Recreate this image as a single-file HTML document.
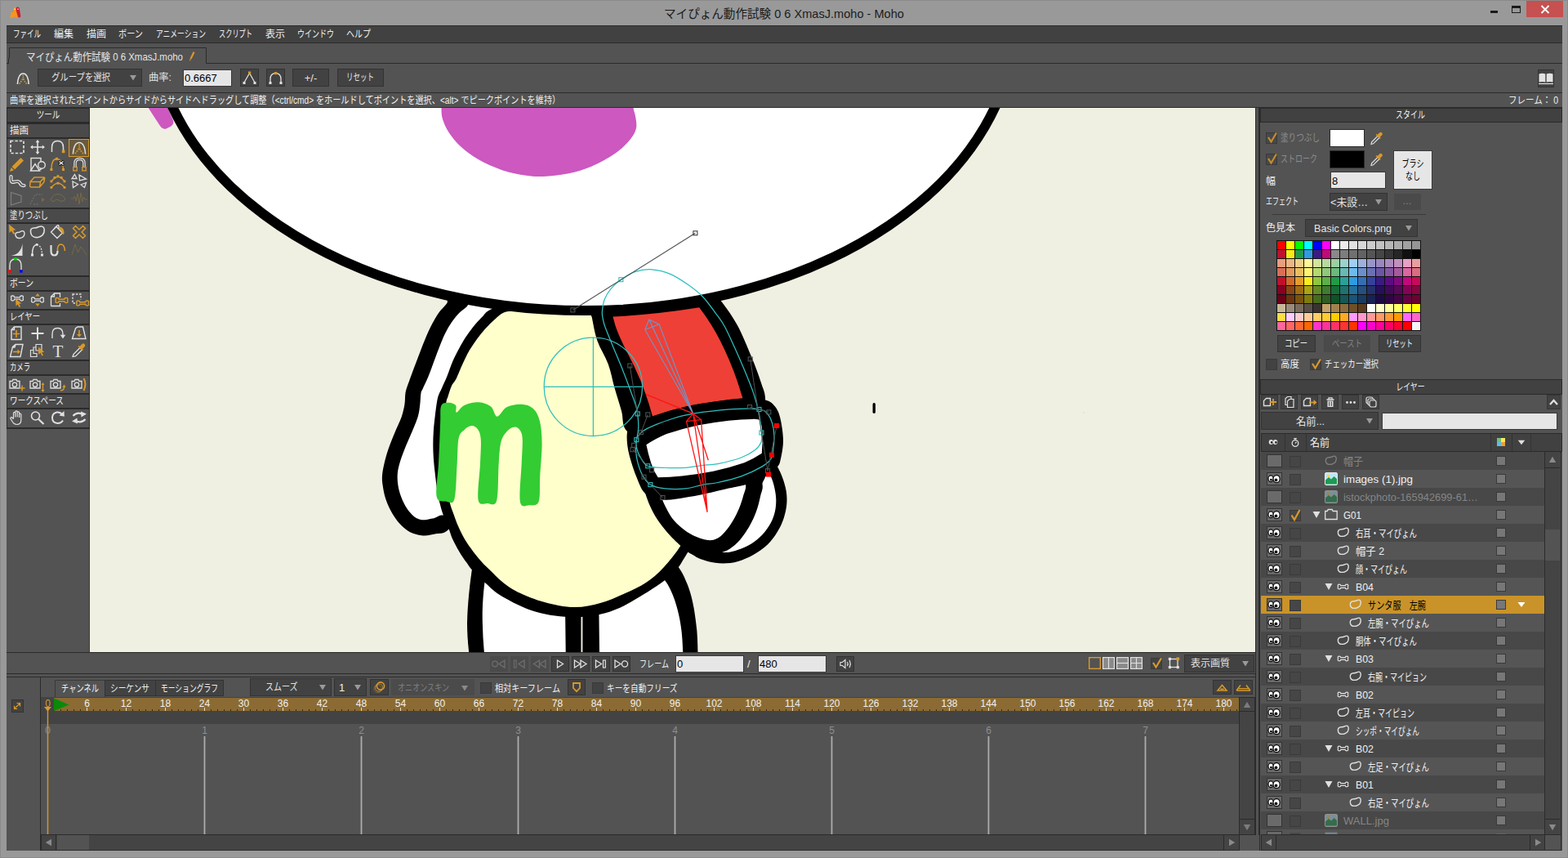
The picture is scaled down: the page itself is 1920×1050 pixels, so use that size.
<!DOCTYPE html>
<html lang="ja"><head><meta charset="utf-8"><title>Moho</title>
<style>
html,body{margin:0;padding:0;}
body{width:1920px;height:1050px;overflow:hidden;background:#999999;font-family:"Liberation Sans", sans-serif;position:relative;}
div,svg,span{position:absolute;}
span{white-space:nowrap;transform-origin:0 50%;}
svg{overflow:visible;}
</style></head>
<body>
<div style="left:0px;top:0px;width:1920px;height:1050px;background:#999999;"></div>
<div style="left:0px;top:0px;width:1920px;height:1px;background:#8a8a8a;"></div>
<div style="left:0px;top:0px;width:1px;height:1050px;background:#8a8a8a;"></div>
<div style="left:1919px;top:0px;width:1px;height:1050px;background:#8a8a8a;"></div>
<div style="left:0px;top:1049px;width:1920px;height:1px;background:#8a8a8a;"></div>
<svg style="left:11px;top:8px;" width="15" height="15" viewBox="0 0 15 15"><path d="M1.2 13.2 L2.6 7.6 Q3.2 6 4.6 6.6 L5.2 7.2 L5.8 2.4 Q6.2 .6 7.6 .9 Q9 1.2 9.3 2.8 L10.2 13 Q10 14 8.8 14 Q7.6 14 7.4 13 L7 11 L6.4 13.2 Q6 14.2 4.8 14 Q4 13.8 3.9 13 L3.6 13.4 Q3 14.3 2 14 Q1.1 13.8 1.2 13.2Z" fill="#f7941d"/>
<path d="M8.6 2 Q9.4 .4 11 .6 Q12.4 .9 12.8 2.4 L14.3 11.6 Q14.4 13.2 13 13.5 Q11.6 13.7 11 12.4 L8.6 4.4 Q8.3 3 8.6 2Z" fill="#c8202f"/>
<rect x="6.6" y="2.6" width="1.3" height="1.3" fill="#fff"/><rect x="10.3" y="2.6" width="1.3" height="1.3" fill="#fff"/></svg>
<div style="left:1825px;top:13px;width:9px;height:3px;background:#1a1a1a;"></div>
<div style="left:1851px;top:7px;width:11px;height:9px;border:1px solid #1a1a1a;border-top:3px solid #1a1a1a;box-sizing:border-box;"></div>
<div style="left:1869px;top:1px;width:45px;height:20px;background:#c75050;"></div>
<svg style="left:1886px;top:6px;" width="12" height="11" viewBox="0 0 12 11"><path d="M1.5 1 L10.5 10 M10.5 1 L1.5 10" stroke="#fff" stroke-width="1.9" fill="none"/></svg>
<div style="left:8px;top:31px;width:1905px;height:1010px;background:#535353;"></div>
<div style="left:8px;top:31px;width:1905px;height:22px;background:#414141;border-top:1px solid #2b2b2b;border-bottom:1px solid #2b2b2b;box-sizing:border-box;"></div>
<div style="left:8px;top:77px;width:1905px;height:1px;background:#2b2b2b;"></div>
<svg style="left:9px;top:57px;" width="246" height="21" viewBox="0 0 246 21"><path d="M1.5 20.5 L1.5 15 L2.5 13 L2.5 1.5 L243.5 1.5 L243.5 20.5" fill="#535353" stroke="#2b2b2b" stroke-width="1"/><rect x="2" y="20" width="241" height="2" fill="#535353"/></svg>
<svg style="left:230px;top:62px;" width="10" height="14" viewBox="0 0 10 14"><path d="M6.5 1.2 L8.6 2 L4.6 10.2 L2.6 9.4Z" fill="#d8992b"/><path d="M2.4 10 L4.3 10.8 L2 12.8Z" fill="#d8992b"/></svg>
<div style="left:8px;top:113px;width:1905px;height:1px;background:#2b2b2b;"></div>
<svg style="left:20px;top:86px;" width="17" height="18" viewBox="0 0 17 18"><path d="M1.4 17 C2 8.5 4.4 3.9 8.3 3.9 C12.2 3.9 14.6 8.5 15.2 17" fill="none" stroke="#e4e4e4" stroke-width="1.5"/><rect x="7.5" y="5.8" width="1.6" height="1.5" fill="#d8992b"/><rect x="7.6" y="8.2" width="1.6" height="1.5" fill="#d8992b"/><rect x="6.6" y="10.6" width="3.4" height="1.5" fill="#d8992b"/><rect x="5" y="13" width="1.7" height="1.5" fill="#d8992b"/><rect x="9.6" y="13" width="1.7" height="1.5" fill="#d8992b"/><rect x="3.3" y="15.2" width="1.7" height="1.5" fill="#d8992b"/><rect x="11.4" y="15.2" width="1.7" height="1.5" fill="#d8992b"/></svg>
<div style="left:46px;top:84px;width:128px;height:22px;background:#424242;border:1px solid #333333;box-sizing:border-box;"></div>
<svg style="left:158px;top:91.0px;" width="10" height="8" viewBox="0 0 10 8"><path d="M1 1 L9 1 L5 7.5Z" fill="#9a9a9a"/></svg>
<div style="left:224px;top:85px;width:60px;height:21px;background:#e6e6e6;border:1px solid #3a3a3a;box-sizing:border-box;"></div>
<div style="left:294px;top:84px;width:23px;height:22px;background:#424242;border:1px solid #333333;box-sizing:border-box;"></div>
<svg style="left:296px;top:86px;" width="19" height="18" viewBox="0 0 19 18"><path d="M3 15 L9.5 3.5 L16 15" fill="none" stroke="#e0e0e0" stroke-width="1.3"/><rect x="1.5" y="14" width="3" height="3" fill="#e0e0e0"/><rect x="14.5" y="14" width="3" height="3" fill="#e0e0e0"/><rect x="8" y="1.5" width="3.2" height="3.2" fill="#d8992b"/></svg>
<div style="left:326px;top:84px;width:23px;height:22px;background:#424242;border:1px solid #333333;box-sizing:border-box;"></div>
<svg style="left:328px;top:86px;" width="19" height="18" viewBox="0 0 19 18"><path d="M3 15 V11 Q3 3.6 9.5 3.6 Q16 3.6 16 11 V15" fill="none" stroke="#e0e0e0" stroke-width="1.3"/><rect x="1.5" y="14" width="3" height="3" fill="#e0e0e0"/><rect x="14.5" y="14" width="3" height="3" fill="#e0e0e0"/><rect x="8" y="2" width="3.2" height="3.2" fill="#d8992b"/></svg>
<div style="left:358px;top:84px;width:45px;height:22px;background:#424242;border:1px solid #333333;box-sizing:border-box;"></div>
<div style="left:413px;top:84px;width:57px;height:22px;background:#424242;border:1px solid #333333;box-sizing:border-box;"></div>
<div style="left:1883px;top:85px;width:20px;height:22px;background:#424242;border:1px solid #333333;box-sizing:border-box;"></div>
<svg style="left:1883px;top:88px;" width="20" height="17" viewBox="0 0 20 17"><path d="M1.5 2.5 Q5.5 1 9.3 2.5 V12.5 Q5.5 11.3 1.5 12.5Z M10.7 2.5 Q14.5 1 18.5 2.5 V12.5 Q14.5 11.3 10.7 12.5Z" fill="#e2e2e2"/><path d="M1 14.5 H19" stroke="#e2e2e2" stroke-width="1.2"/></svg>
<div style="left:8px;top:131px;width:1905px;height:1px;background:#2b2b2b;"></div>
<div style="left:8px;top:132px;width:102px;height:393px;background:#2b2b2b;"></div>
<div style="left:9px;top:133px;width:100px;height:16px;background:#444444;"></div>
<div style="left:9px;top:525px;width:100px;height:273px;background:#535353;"></div>
<div style="left:8px;top:525px;width:1px;height:273px;background:#535353;"></div>
<div style="left:109px;top:525px;width:1px;height:273px;background:#3c3c3c;"></div>
<div style="left:9px;top:152px;width:100px;height:16px;background:#4a4a4a;"></div>
<div style="left:9px;top:170px;width:100px;height:84px;background:#535353;"></div>
<div style="left:9px;top:256px;width:100px;height:16px;background:#4a4a4a;"></div>
<div style="left:9px;top:274px;width:100px;height:63px;background:#535353;"></div>
<div style="left:9px;top:339px;width:100px;height:16px;background:#4a4a4a;"></div>
<div style="left:9px;top:357px;width:100px;height:21px;background:#535353;"></div>
<div style="left:9px;top:380px;width:100px;height:16px;background:#4a4a4a;"></div>
<div style="left:9px;top:398px;width:100px;height:42px;background:#535353;"></div>
<div style="left:9px;top:442px;width:100px;height:16px;background:#4a4a4a;"></div>
<div style="left:9px;top:460px;width:100px;height:21px;background:#535353;"></div>
<div style="left:9px;top:483px;width:100px;height:16px;background:#4a4a4a;"></div>
<div style="left:9px;top:501px;width:100px;height:22px;background:#535353;"></div>
<div style="left:84px;top:170px;width:25px;height:22px;background:#6a5a3c;border:1px solid #d8992b;box-sizing:border-box;"></div>
<svg style="left:9.5px;top:170px;" width="22" height="20" viewBox="0 0 22 20"><rect x="3" y="2.5" width="16" height="15" fill="none" stroke="#e0e0e0" stroke-width="1.7" stroke-dasharray="3.4 2"/></svg>
<svg style="left:35.0px;top:170px;" width="22" height="20" viewBox="0 0 22 20"><path d="M11 2.5 V17.5 M3.5 10 H18.5" fill="none" stroke="#e0e0e0" stroke-width="1.6" /><path d="M11 1 L8.6 4.2 H13.4Z M11 19 L8.6 15.8 H13.4Z M2 10 L5.2 7.6 V12.4Z M20 10 L16.8 7.6 V12.4Z" fill="#e0e0e0" stroke="#e0e0e0" stroke-width="0" /></svg>
<svg style="left:60.0px;top:170px;" width="22" height="20" viewBox="0 0 22 20"><path d="M3.5 16 V10.5 Q3.5 2.5 10.5 2.5 Q17.5 2.5 17.5 10.5 V14" fill="none" stroke="#e0e0e0" stroke-width="1.5" /><rect x="15.8" y="13.6" width="3.6" height="3.6" fill="#d8992b"/></svg>
<svg style="left:85.5px;top:170.5px;" width="22" height="20" viewBox="0 0 22 20"><path d="M3.4 17.5 C4 9 6.6 3.4 11 3.4 C15.4 3.4 18 9 18.6 17.5" fill="none" stroke="#e0e0e0" stroke-width="1.5" /><rect x="10.2" y="5.6" width="1.7" height="1.6" fill="#d8992b"/><rect x="10.3" y="8.1" width="1.7" height="1.6" fill="#d8992b"/><rect x="9.2" y="10.7" width="3.7" height="1.6" fill="#d8992b"/><rect x="7.5" y="13.2" width="1.8" height="1.6" fill="#d8992b"/><rect x="12.6" y="13.2" width="1.8" height="1.6" fill="#d8992b"/><rect x="5.6" y="15.6" width="1.8" height="1.6" fill="#d8992b"/><rect x="14.5" y="15.6" width="1.8" height="1.6" fill="#d8992b"/></svg>
<svg style="left:9.5px;top:191px;" width="22" height="20" viewBox="0 0 22 20"><path d="M15.5 2 L19 5.5 L8 16.5 L4.5 13Z" fill="#d8992b"/><path d="M3.7 14 L7 17.3 L2 19Z" fill="#d8992b"/></svg>
<svg style="left:35.0px;top:191px;" width="22" height="20" viewBox="0 0 22 20"><rect x="3" y="2.5" width="12" height="14" fill="none" stroke="#e0e0e0" stroke-width="1.4"/><path d="M2.5 18 L8 9.5 L13.5 18Z" fill="#535353" stroke="#e0e0e0" stroke-width="1.4"/><circle cx="16" cy="11" r="4.3" fill="#535353" stroke="#e0e0e0" stroke-width="1.4"/></svg>
<svg style="left:60.0px;top:191px;" width="22" height="20" viewBox="0 0 22 20"><path d="M3 16 Q3 3.5 9.5 3.5 Q16 3.5 17.5 15" fill="none" stroke="#d8992b" stroke-width="1.4" /><rect x="1.4" y="15" width="3" height="3" fill="#d8992b"/><rect x="8" y="1.8" width="3" height="3" fill="#d8992b"/><rect x="16" y="15" width="3" height="3" fill="#d8992b"/><path d="M12 6 l6 5 M18 6 l-6 5" stroke="#111" stroke-width="3"/><path d="M12.5 6.5 l5 4 M17.5 6.5 l-5 4" stroke="#fff" stroke-width="1.2"/></svg>
<svg style="left:85.5px;top:191px;" width="22" height="20" viewBox="0 0 22 20"><path d="M6 14 V9 Q6 3.5 11.5 3.5 Q17 3.5 17 9 V14" fill="none" stroke="#e0e0e0" stroke-width="3.6" /><path d="M6 14 V9 Q6 3.5 11.5 3.5 Q17 3.5 17 9 V14" fill="none" stroke="#535353" stroke-width="1.2" /><rect x="3.8" y="13.5" width="4.4" height="4.4" fill="#535353" stroke="#d8992b" stroke-width="1.3"/><rect x="14.8" y="13.5" width="4.4" height="4.4" fill="#535353" stroke="#d8992b" stroke-width="1.3"/></svg>
<svg style="left:9.5px;top:212px;" width="22" height="20" viewBox="0 0 22 20"><path d="M3.5 4 V8 Q3.5 12 8 10.5 Q13 9 14.5 12 Q16 15.5 19.5 15" fill="none" stroke="#e0e0e0" stroke-width="4.2" stroke-linecap="round"/><path d="M3.5 4 V8 Q3.5 12 8 10.5 Q13 9 14.5 12 Q16 15.5 19.5 15" fill="none" stroke="#535353" stroke-width="1.6" stroke-linecap="round"/></svg>
<svg style="left:35.0px;top:212px;" width="22" height="20" viewBox="0 0 22 20"><path d="M2 10.5 L7 5 H18.5 Q20 5 19.6 6.8 L18.8 11 L13.5 17 H3 Q1.6 17 1.7 15.5Z M2 10.5 H13 Q14.6 10.5 14.4 12 L13.5 17 M14 10.6 L19.4 5.4" fill="none" stroke="#d8992b" stroke-width="1.5" /></svg>
<svg style="left:60.0px;top:212px;" width="22" height="20" viewBox="0 0 22 20"><path d="M3 10 Q11 -1 19 10 M3 17.5 Q11 7 19 17.5" fill="none" stroke="#d8992b" stroke-width="1.3" /><rect x="1.5" y="8.5" width="2.8" height="2.8" fill="#d8992b"/><rect x="5.5" y="4" width="2.8" height="2.8" fill="#d8992b"/><rect x="9.6" y="2.2" width="2.8" height="2.8" fill="#d8992b"/><rect x="13.8" y="4" width="2.8" height="2.8" fill="#d8992b"/><rect x="17.6" y="8.5" width="2.8" height="2.8" fill="#d8992b"/><rect x="1.5" y="16" width="2.8" height="2.8" fill="#d8992b"/><rect x="9.6" y="10.8" width="2.8" height="2.8" fill="#d8992b"/><rect x="17.6" y="16" width="2.8" height="2.8" fill="#d8992b"/></svg>
<svg style="left:85.5px;top:212px;" width="22" height="20" viewBox="0 0 22 20"><path d="M2 6.5 L5.5 1.5 L8 6.5Z M11 2 L19.5 7 L11.5 9Z M3 10 L9.5 13.5 L3.5 17.5Z M13 14 L19.5 11.5 L17.5 17.5Z" fill="none" stroke="#e0e0e0" stroke-width="1.3" /></svg>
<svg style="left:9.5px;top:233px;" width="22" height="20" viewBox="0 0 22 20"><path d="M3.5 2.5 L16 6.5 V14 L3.5 18Z" fill="none" stroke="#808080" stroke-width="1.1" /></svg>
<svg style="left:35.0px;top:233px;" width="22" height="20" viewBox="0 0 22 20"><path d="M2 17 L8 5 H17 M6 17 H12" fill="none" stroke="#777" stroke-width="1" stroke-dasharray="2 1.6"/><path d="M16 9 l4 2.5 l-4 2.5Z" fill="#7a6a44"/></svg>
<svg style="left:60.0px;top:233px;" width="22" height="20" viewBox="0 0 22 20"><path d="M2 11 Q6 4 11 4.5 Q17 5 20 11 Q16 15 12 12 Q8 10 6.5 13.5 Q3.5 14 2 11Z" fill="none" stroke="#7a6a44" stroke-width="1" /></svg>
<svg style="left:85.5px;top:233px;" width="22" height="20" viewBox="0 0 22 20"><path d="M1 10 H4 L5.5 7 L7 13 L9 4 L11 17 L13 3 L15 14 L16.5 8 L18 11 H21" fill="none" stroke="#7a6a44" stroke-width="0.9" /></svg>
<svg style="left:9.5px;top:274px;" width="22" height="20" viewBox="0 0 22 20"><path d="M1 .5 L1.5 11 L4 8.6 L6.3 12.8 L8.2 11.8 L6 7.8 L9.5 7.4Z" fill="#d8992b"/><path d="M9 14 Q8 11 11.5 10.5 Q14 10.5 16 9 Q19.5 7.5 20 11.5 Q20 16.5 14.5 17.5 Q10 18 9 14Z" fill="none" stroke="#e0e0e0" stroke-width="1.4" /></svg>
<svg style="left:35.0px;top:274px;" width="22" height="20" viewBox="0 0 22 20"><path d="M2.5 10 Q2 5 6.5 5 Q9.5 5.2 12.5 3.5 Q18.5 1.5 19.3 7 Q19.5 14.5 11.5 16.5 Q3.5 17.5 2.5 10Z" fill="none" stroke="#e0e0e0" stroke-width="1.6" /></svg>
<svg style="left:60.0px;top:274px;" width="22" height="20" viewBox="0 0 22 20"><path d="M2.5 10 L9 3.5 L16.5 11 L10 17.5Z M5 7.5 L8 4 L10 2 Q11.5 1 12 3 L12 6" fill="none" stroke="#e0e0e0" stroke-width="1.4" /><path d="M12.5 3.5 Q17.5 4 18.5 9.5 Q19 12.5 17.5 13 Q16 12.5 16.3 10.5 L12 5.5Z" fill="#d8992b"/></svg>
<svg style="left:85.5px;top:274px;" width="22" height="20" viewBox="0 0 22 20"><path d="M3.5 5.5 L6.5 2.5 L11 7 L15.5 2.5 L18.5 5.5 L14 10 L18.5 14.5 L15.5 17.5 L11 13 L6.5 17.5 L3.5 14.5 L8 10Z" fill="none" stroke="#d8992b" stroke-width="1.5" /></svg>
<svg style="left:9.5px;top:296px;" width="22" height="20" viewBox="0 0 22 20"><path d="M3 17 Q15.5 15.5 17.5 2 V17Z" fill="#e0e0e0"/></svg>
<svg style="left:35.0px;top:296px;" width="22" height="20" viewBox="0 0 22 20"><path d="M4.5 15 Q4.5 4 10 3.5" fill="none" stroke="#e0e0e0" stroke-width="1.4" /><path d="M10 3.5 Q16 4 16.5 15" fill="none" stroke="#e0e0e0" stroke-width="1.3" stroke-dasharray="2 1.6"/><rect x="3" y="14.5" width="3" height="3" fill="#e0e0e0"/><rect x="15" y="14.5" width="3" height="3" fill="#e0e0e0"/><rect x="8.8" y="2" width="2.6" height="2.6" fill="#e0e0e0"/></svg>
<svg style="left:60.0px;top:296px;" width="22" height="20" viewBox="0 0 22 20"><path d="M2.5 4 V11 Q2.5 16.5 6.5 16.5 Q10.5 16.5 10.5 11" fill="none" stroke="#e0e0e0" stroke-width="2.2" /><path d="M10.5 11 V8 Q11 3 15 3 Q19 3.5 19.5 11" fill="none" stroke="#d8992b" stroke-width="1.6" /></svg>
<svg style="left:85.5px;top:296px;" width="22" height="20" viewBox="0 0 22 20"><path d="M2 16 L6 3 L9.5 13 L13 6 L16 10 L20 16" fill="none" stroke="#7a6a44" stroke-width="0.9" /></svg>
<svg style="left:9.5px;top:315px;" width="22" height="20" viewBox="0 0 22 20"><path d="M2 17 V10 Q2 2 9 2 Q16 2 16 10 V17" fill="none" stroke="#e0e0e0" stroke-width="1.4" /><rect x="0.2" y="15.2" width="3.4" height="3.4" fill="#ff0000"/><rect x="14.2" y="15.2" width="3.4" height="3.4" fill="#0000ff"/><rect x="7.2" y="0.2" width="3.4" height="3.4" fill="#00d000"/></svg>
<svg style="left:9.5px;top:357px;" width="22" height="20" viewBox="0 0 22 20"><path d="M4 8 q-1.5 -3 1.5 -3 q2 0 2.2 1.8 h6.6 q.2 -1.8 2.2 -1.8 q3 0 1.5 3 q1.5 3 -1.5 3 q-2 0 -2.2 -1.8 h-6.6 q-.2 1.8 -2.2 1.8 q-3 0 -1.5 -3Z" fill="none" stroke="#e0e0e0" stroke-width="1.3" /><path d="M9 8.5 L9.5 17.5 L11.7 15.4 L13.6 19 L15.2 18.2 L13.3 14.7 L16.4 14.4Z" fill="#d8992b"/></svg>
<svg style="left:35.0px;top:357px;" width="22" height="20" viewBox="0 0 22 20"><path d="M4 10 q-1.5 -3 1.5 -3 q2 0 2.2 1.8 h6.6 q.2 -1.8 2.2 -1.8 q3 0 1.5 3 q1.5 3 -1.5 3 q-2 0 -2.2 -1.8 h-6.6 q-.2 1.8 -2.2 1.8 q-3 0 -1.5 -3Z" fill="none" stroke="#e0e0e0" stroke-width="1.3" /><path d="M11 2 L8.2 5.6 H13.8Z M11 18 L8.2 14.4 H13.8Z" fill="#d8992b"/></svg>
<svg style="left:60.0px;top:357px;" width="22" height="20" viewBox="0 0 22 20"><path d="M2.5 17.5 V6 L6.5 2 H13.5 V7 M13.5 14 V17.5 H2.5 M6.5 2 V6 H2.5" fill="none" stroke="#e0e0e0" stroke-width="1.3" /><path d="M8.5 10.5 q-1.5 -3 1.5 -3 q2 0 2.2 1.8 h6.6 q.2 -1.8 2.2 -1.8 q3 0 1.5 3 q1.5 3 -1.5 3 q-2 0 -2.2 -1.8 h-6.6 q-.2 1.8 -2.2 1.8 q-3 0 -1.5 -3Z" fill="none" stroke="#d8992b" stroke-width="1.5" /></svg>
<svg style="left:85.5px;top:357px;" width="22" height="20" viewBox="0 0 22 20"><rect x="3" y="3" width="10" height="11" fill="none" stroke="#e0e0e0" stroke-width="1.3" stroke-dasharray="2.4 1.6"/><rect x="8" y="9.5" width="13" height="9" fill="#535353"/><path d="M8.2 14 q-1.5 -3 1.5 -3 q2 0 2.2 1.8 h6.6 q.2 -1.8 2.2 -1.8 q3 0 1.5 3 q1.5 3 -1.5 3 q-2 0 -2.2 -1.8 h-6.6 q-.2 1.8 -2.2 1.8 q-3 0 -1.5 -3Z" fill="none" stroke="#d8992b" stroke-width="1.5" /></svg>
<svg style="left:9.5px;top:398px;" width="22" height="20" viewBox="0 0 22 20"><path d="M4 17.5 V5.5 L7.5 2 H16 V17.5Z M7.5 2 V5.5 H4" fill="none" stroke="#e0e0e0" stroke-width="1.4" /><path d="M10 6 V15 M5.8 10.5 H14.2" fill="none" stroke="#d8992b" stroke-width="1.6" /></svg>
<svg style="left:35.0px;top:398px;" width="22" height="20" viewBox="0 0 22 20"><path d="M11 2.5 V17.5 M3.5 10 H18.5" fill="none" stroke="#e0e0e0" stroke-width="2" /></svg>
<svg style="left:60.0px;top:398px;" width="22" height="20" viewBox="0 0 22 20"><path d="M4 16 V11 Q4 3.5 10.5 3.5 Q17 3.5 17 11 V12" fill="none" stroke="#e0e0e0" stroke-width="1.4" /><path d="M17 16.5 L13.8 11.8 H20.2Z" fill="#e0e0e0"/></svg>
<svg style="left:85.5px;top:398px;" width="22" height="20" viewBox="0 0 22 20"><path d="M2.5 16.5 L6.5 4 L9 2 H15.5 L19 16.5Z" fill="none" stroke="#e0e0e0" stroke-width="1.4" /><path d="M11 6 V12" fill="none" stroke="#d8992b" stroke-width="1.6" /><path d="M11 14.5 L8 11 H14Z" fill="#d8992b"/></svg>
<svg style="left:9.5px;top:419px;" width="22" height="20" viewBox="0 0 22 20"><path d="M2.5 17.5 L5.5 5.5 L9 2.5 H18 L15 17.5Z M9 2.5 L8 6 H5.5" fill="none" stroke="#e0e0e0" stroke-width="1.4" /><path d="M6 11.5 H12" fill="none" stroke="#d8992b" stroke-width="1.6" /><path d="M15 11.5 L11.5 8.5 V14.5Z" fill="#d8992b"/></svg>
<svg style="left:35.0px;top:419px;" width="22" height="20" viewBox="0 0 22 20"><path d="M2.5 17.5 V9.5 H6 V13.5 H10 V17.5Z M6 13.5 V6 H9 V10 H13 V13.5 M9 6 V2.5 H16 V10 H13" fill="none" stroke="#e0e0e0" stroke-width="1.2" /><path d="M12 5.5 L12.4 14.8 L14.6 12.8 L16.3 16.5 L18 15.7 L16.2 12.2 L19.2 11.8Z" fill="#d8992b"/></svg>
<span style="left:64.5px;top:418px;font-family:'Liberation Serif',serif;font-size:21px;line-height:24px;color:#e0e0e0;">T</span>
<svg style="left:85.5px;top:419px;" width="22" height="20" viewBox="0 0 22 20"><path d="M3 17.5 L4 14.5 L12 6.5 L14.5 9 L6.5 17Z" fill="none" stroke="#e0e0e0" stroke-width="1.3" /><path d="M11.5 5 L14.5 2 Q16 .6 17.6 2.2 Q19 3.8 17.6 5.2 L15 8 L16 9 L14.8 10.2 L9.6 5 L10.8 3.8Z" fill="#d8992b"/></svg>
<svg style="left:9.5px;top:460px;" width="22" height="20" viewBox="0 0 22 20"><path d="M2 6.5 H5 L6 4.5 H10 L11 6.5 H14 V15 H2Z" fill="none" stroke="#e0e0e0" stroke-width="1.3" /><circle cx="8" cy="10.8" r="2.7" fill="none" stroke="#e0e0e0" stroke-width="1.3"/><path d="M17 11.5 V18.5 M13.5 15 H20.5" fill="none" stroke="#d8992b" stroke-width="1.4" /></svg>
<svg style="left:35.0px;top:460px;" width="22" height="20" viewBox="0 0 22 20"><path d="M2 6.5 H5 L6 4.5 H10 L11 6.5 H14 V15 H2Z" fill="none" stroke="#e0e0e0" stroke-width="1.3" /><circle cx="8" cy="10.8" r="2.7" fill="none" stroke="#e0e0e0" stroke-width="1.3"/><path d="M17.5 10 V18" fill="none" stroke="#d8992b" stroke-width="1.3" /><path d="M17.5 8 L15.5 11 H19.5Z M17.5 20 L15.5 17 H19.5Z" fill="#d8992b"/></svg>
<svg style="left:60.0px;top:460px;" width="22" height="20" viewBox="0 0 22 20"><path d="M2 6.5 H5 L6 4.5 H10 L11 6.5 H14 V15 H2Z" fill="none" stroke="#e0e0e0" stroke-width="1.3" /><circle cx="8" cy="10.8" r="2.7" fill="none" stroke="#e0e0e0" stroke-width="1.3"/><path d="M14 18 Q18.5 18 18.5 13.5" fill="none" stroke="#d8992b" stroke-width="1.4" /><path d="M18.5 10.5 L16.3 14 H20.7Z" fill="#d8992b"/></svg>
<svg style="left:85.5px;top:460px;" width="22" height="20" viewBox="0 0 22 20"><path d="M2 6.5 H5 L6 4.5 H10 L11 6.5 H14 V15 H2Z" fill="none" stroke="#e0e0e0" stroke-width="1.3" /><circle cx="8" cy="10.8" r="2.7" fill="none" stroke="#e0e0e0" stroke-width="1.3"/><path d="M16.5 3 Q20.5 10 16.5 18" fill="none" stroke="#d8992b" stroke-width="2" /></svg>
<svg style="left:9.5px;top:501px;" width="22" height="20" viewBox="0 0 22 20"><path d="M6.5 11 V4.5 Q6.5 3.3 7.7 3.3 Q8.8 3.3 8.8 4.5 V9.5 V3 Q8.8 1.8 10 1.8 Q11.2 1.8 11.2 3 V9.5 V4 Q11.2 2.8 12.4 2.8 Q13.6 2.8 13.6 4 V10 V6 Q13.6 5 14.7 5 Q15.8 5 15.8 6 V13 Q15.8 18.5 10.5 18.5 Q7.5 18.5 5.5 15.5 L3 11.5 Q2.4 10.3 3.5 9.7 Q4.5 9.3 5.3 10.3 L6.5 12" fill="none" stroke="#e0e0e0" stroke-width="1.2" /></svg>
<svg style="left:35.0px;top:501px;" width="22" height="20" viewBox="0 0 22 20"><circle cx="8.5" cy="8" r="5" fill="none" stroke="#e0e0e0" stroke-width="1.6"/><path d="M12 11.8 L18.5 18" fill="none" stroke="#e0e0e0" stroke-width="2.2" /></svg>
<svg style="left:60.0px;top:501px;" width="22" height="20" viewBox="0 0 22 20"><path d="M16.5 6.5 Q13.5 2.8 9.5 3.5 Q4 4.8 4 10.5 Q4.3 16.5 10.5 17 Q15 17 17 13.5" fill="none" stroke="#e0e0e0" stroke-width="2" /><path d="M12.5 7.5 L18.5 2 L18.8 8.8Z" fill="#e0e0e0"/></svg>
<svg style="left:85.5px;top:501px;" width="22" height="20" viewBox="0 0 22 20"><path d="M3.5 8 Q8 3 14 5.5 M18.5 12 Q14 17 8 14.5" fill="none" stroke="#e0e0e0" stroke-width="2.2" /><path d="M13 2.5 L20 5.5 L13.5 9.5Z M9 17.5 L2 14.5 L8.5 10.5Z" fill="#e0e0e0"/></svg>
<div style="left:1537px;top:132px;width:5px;height:909px;background:#535353;"></div>
<div style="left:1537px;top:132px;width:1px;height:909px;background:#2b2b2b;"></div>
<div style="left:1541px;top:132px;width:2px;height:909px;background:#2b2b2b;"></div>
<div style="left:1543px;top:132px;width:370px;height:18px;background:#414141;border:1px solid #2b2b2b;box-sizing:border-box;"></div>
<div style="left:1550px;top:162px;width:14px;height:14px;background:#484848;border:1px solid #3a3a3a;box-sizing:border-box;"></div>
<svg style="left:1550px;top:160px;opacity:.85;" width="16" height="16" viewBox="0 0 16 16"><path d="M3 8 L6.5 13.5 L13 2.5" fill="none" stroke="#d8992b" stroke-width="2.2"/></svg>
<div style="left:1628px;top:158px;width:43px;height:22px;background:#ffffff;border:1px solid #2b2b2b;box-sizing:border-box;"></div>
<svg style="left:1677px;top:160px;" width="18" height="18" viewBox="0 0 18 18"><path d="M2 16.5 L2.6 13.8 L10 6.4 L12 8.4 L4.6 15.8Z" fill="none" stroke="#e0e0e0" stroke-width="1.2"/><path d="M9.6 5 L12.4 2.2 Q13.8 1 15.2 2.4 Q16.6 3.8 15.3 5.2 L12.8 7.8 L13.8 8.8 L12.6 10 L7.6 5 L8.8 3.8Z" fill="#d8992b"/></svg>
<div style="left:1550px;top:188px;width:14px;height:14px;background:#484848;border:1px solid #3a3a3a;box-sizing:border-box;"></div>
<svg style="left:1550px;top:186px;opacity:.85;" width="16" height="16" viewBox="0 0 16 16"><path d="M3 8 L6.5 13.5 L13 2.5" fill="none" stroke="#d8992b" stroke-width="2.2"/></svg>
<div style="left:1628px;top:184px;width:43px;height:22px;background:#000000;border:1px solid #2b2b2b;box-sizing:border-box;"></div>
<svg style="left:1677px;top:186px;" width="18" height="18" viewBox="0 0 18 18"><path d="M2 16.5 L2.6 13.8 L10 6.4 L12 8.4 L4.6 15.8Z" fill="none" stroke="#e0e0e0" stroke-width="1.2"/><path d="M9.6 5 L12.4 2.2 Q13.8 1 15.2 2.4 Q16.6 3.8 15.3 5.2 L12.8 7.8 L13.8 8.8 L12.6 10 L7.6 5 L8.8 3.8Z" fill="#d8992b"/></svg>
<div style="left:1706px;top:184px;width:48px;height:48px;background:#e6e6e6;border:1px solid #3a3a3a;box-sizing:border-box;"></div>
<div style="left:1629px;top:210px;width:68px;height:21px;background:#e6e6e6;border:1px solid #3a3a3a;box-sizing:border-box;"></div>
<div style="left:1628px;top:236px;width:71px;height:22px;background:#424242;border:1px solid #333333;box-sizing:border-box;"></div>
<svg style="left:1683px;top:243.0px;" width="10" height="8" viewBox="0 0 10 8"><path d="M1 1 L9 1 L5 7.5Z" fill="#9a9a9a"/></svg>
<div style="left:1707px;top:237px;width:33px;height:20px;background:#4a4a4a;border:1px solid #4a4a4a;box-sizing:border-box;"></div>
<div style="left:1558px;top:262px;width:188px;height:1px;background:#3a3a3a;"></div>
<div style="left:1598px;top:268px;width:138px;height:22px;background:#424242;border:1px solid #333333;box-sizing:border-box;"></div>
<svg style="left:1720px;top:275.0px;" width="10" height="8" viewBox="0 0 10 8"><path d="M1 1 L9 1 L5 7.5Z" fill="#9a9a9a"/></svg>
<svg style="left:1563px;top:294px;" width="178" height="112" viewBox="0 0 178 112"><rect x="0" y="0" width="177" height="111" fill="#111"/><rect x="1" y="1" width="10" height="10" fill="#ff0000"/><rect x="12" y="1" width="10" height="10" fill="#ffff00"/><rect x="23" y="1" width="10" height="10" fill="#00ff00"/><rect x="34" y="1" width="10" height="10" fill="#00ffff"/><rect x="45" y="1" width="10" height="10" fill="#0000ff"/><rect x="56" y="1" width="10" height="10" fill="#ff00ff"/><rect x="67" y="1" width="10" height="10" fill="#ffffff"/><rect x="78" y="1" width="10" height="10" fill="#ebebeb"/><rect x="89" y="1" width="10" height="10" fill="#e1e1e1"/><rect x="100" y="1" width="10" height="10" fill="#d7d7d7"/><rect x="111" y="1" width="10" height="10" fill="#cccccc"/><rect x="122" y="1" width="10" height="10" fill="#c2c2c2"/><rect x="133" y="1" width="10" height="10" fill="#b7b7b7"/><rect x="144" y="1" width="10" height="10" fill="#acacac"/><rect x="155" y="1" width="10" height="10" fill="#a1a1a1"/><rect x="166" y="1" width="10" height="10" fill="#959595"/><rect x="1" y="12" width="10" height="10" fill="#c0102e"/><rect x="12" y="12" width="10" height="10" fill="#f7ec13"/><rect x="23" y="12" width="10" height="10" fill="#219a49"/><rect x="34" y="12" width="10" height="10" fill="#2f9be0"/><rect x="45" y="12" width="10" height="10" fill="#3a1a85"/><rect x="56" y="12" width="10" height="10" fill="#c1087c"/><rect x="67" y="12" width="10" height="10" fill="#898989"/><rect x="78" y="12" width="10" height="10" fill="#7d7d7d"/><rect x="89" y="12" width="10" height="10" fill="#707070"/><rect x="100" y="12" width="10" height="10" fill="#626262"/><rect x="111" y="12" width="10" height="10" fill="#555555"/><rect x="122" y="12" width="10" height="10" fill="#464646"/><rect x="133" y="12" width="10" height="10" fill="#363636"/><rect x="144" y="12" width="10" height="10" fill="#262626"/><rect x="155" y="12" width="10" height="10" fill="#111111"/><rect x="166" y="12" width="10" height="10" fill="#000000"/><rect x="1" y="23" width="10" height="10" fill="#e89f7e"/><rect x="12" y="23" width="10" height="10" fill="#ebb683"/><rect x="23" y="23" width="10" height="10" fill="#f1cf88"/><rect x="34" y="23" width="10" height="10" fill="#fff799"/><rect x="45" y="23" width="10" height="10" fill="#d3e3a0"/><rect x="56" y="23" width="10" height="10" fill="#b8d9a0"/><rect x="67" y="23" width="10" height="10" fill="#9ecfa2"/><rect x="78" y="23" width="10" height="10" fill="#9dd1cc"/><rect x="89" y="23" width="10" height="10" fill="#a0cff4"/><rect x="100" y="23" width="10" height="10" fill="#9fb0dc"/><rect x="111" y="23" width="10" height="10" fill="#9896c8"/><rect x="122" y="23" width="10" height="10" fill="#9a87bf"/><rect x="133" y="23" width="10" height="10" fill="#ab8bbd"/><rect x="144" y="23" width="10" height="10" fill="#c28fbf"/><rect x="155" y="23" width="10" height="10" fill="#e8a0c3"/><rect x="166" y="23" width="10" height="10" fill="#e99f9f"/><rect x="1" y="34" width="10" height="10" fill="#d86f56"/><rect x="12" y="34" width="10" height="10" fill="#e19a5a"/><rect x="23" y="34" width="10" height="10" fill="#ebbd61"/><rect x="34" y="34" width="10" height="10" fill="#fff66e"/><rect x="45" y="34" width="10" height="10" fill="#b5d872"/><rect x="56" y="34" width="10" height="10" fill="#8fc977"/><rect x="67" y="34" width="10" height="10" fill="#6bb97e"/><rect x="78" y="34" width="10" height="10" fill="#68b9b4"/><rect x="89" y="34" width="10" height="10" fill="#6dbbee"/><rect x="100" y="34" width="10" height="10" fill="#6b8fcb"/><rect x="111" y="34" width="10" height="10" fill="#6a70b4"/><rect x="122" y="34" width="10" height="10" fill="#6b56a4"/><rect x="133" y="34" width="10" height="10" fill="#8557a1"/><rect x="144" y="34" width="10" height="10" fill="#a65a9e"/><rect x="155" y="34" width="10" height="10" fill="#d967a0"/><rect x="166" y="34" width="10" height="10" fill="#da6c80"/><rect x="1" y="45" width="10" height="10" fill="#c0102e"/><rect x="12" y="45" width="10" height="10" fill="#d2692a"/><rect x="23" y="45" width="10" height="10" fill="#e39d2b"/><rect x="34" y="45" width="10" height="10" fill="#f9ee1b"/><rect x="45" y="45" width="10" height="10" fill="#8fc63f"/><rect x="56" y="45" width="10" height="10" fill="#5db045"/><rect x="67" y="45" width="10" height="10" fill="#219a49"/><rect x="78" y="45" width="10" height="10" fill="#28a19a"/><rect x="89" y="45" width="10" height="10" fill="#2f9be0"/><rect x="100" y="45" width="10" height="10" fill="#346eb5"/><rect x="111" y="45" width="10" height="10" fill="#35429a"/><rect x="122" y="45" width="10" height="10" fill="#3a1a85"/><rect x="133" y="45" width="10" height="10" fill="#5c0c80"/><rect x="144" y="45" width="10" height="10" fill="#81097f"/><rect x="155" y="45" width="10" height="10" fill="#c1087c"/><rect x="166" y="45" width="10" height="10" fill="#c60a59"/><rect x="1" y="56" width="10" height="10" fill="#860023"/><rect x="12" y="56" width="10" height="10" fill="#8b4513"/><rect x="23" y="56" width="10" height="10" fill="#a06c14"/><rect x="34" y="56" width="10" height="10" fill="#aba50e"/><rect x="45" y="56" width="10" height="10" fill="#648a27"/><rect x="56" y="56" width="10" height="10" fill="#3f7c2e"/><rect x="67" y="56" width="10" height="10" fill="#166c36"/><rect x="78" y="56" width="10" height="10" fill="#1d736e"/><rect x="89" y="56" width="10" height="10" fill="#236f9b"/><rect x="100" y="56" width="10" height="10" fill="#264f7e"/><rect x="111" y="56" width="10" height="10" fill="#25306a"/><rect x="122" y="56" width="10" height="10" fill="#260f5c"/><rect x="133" y="56" width="10" height="10" fill="#400959"/><rect x="144" y="56" width="10" height="10" fill="#590759"/><rect x="155" y="56" width="10" height="10" fill="#850357"/><rect x="166" y="56" width="10" height="10" fill="#870540"/><rect x="1" y="67" width="10" height="10" fill="#6a0019"/><rect x="12" y="67" width="10" height="10" fill="#6b350f"/><rect x="23" y="67" width="10" height="10" fill="#7a530f"/><rect x="34" y="67" width="10" height="10" fill="#7f7d08"/><rect x="45" y="67" width="10" height="10" fill="#476b1d"/><rect x="56" y="67" width="10" height="10" fill="#2e5e22"/><rect x="67" y="67" width="10" height="10" fill="#0f5227"/><rect x="78" y="67" width="10" height="10" fill="#155754"/><rect x="89" y="67" width="10" height="10" fill="#19547a"/><rect x="100" y="67" width="10" height="10" fill="#1a3b61"/><rect x="111" y="67" width="10" height="10" fill="#1a2251"/><rect x="122" y="67" width="10" height="10" fill="#1c0a47"/><rect x="133" y="67" width="10" height="10" fill="#300545"/><rect x="144" y="67" width="10" height="10" fill="#440446"/><rect x="155" y="67" width="10" height="10" fill="#660343"/><rect x="166" y="67" width="10" height="10" fill="#680431"/><rect x="1" y="78" width="10" height="10" fill="#c8b89a"/><rect x="12" y="78" width="10" height="10" fill="#9a8c78"/><rect x="23" y="78" width="10" height="10" fill="#7a6c5c"/><rect x="34" y="78" width="10" height="10" fill="#5a4f46"/><rect x="45" y="78" width="10" height="10" fill="#3a322e"/><rect x="56" y="78" width="10" height="10" fill="#c3a368"/><rect x="67" y="78" width="10" height="10" fill="#a08250"/><rect x="78" y="78" width="10" height="10" fill="#8a6c3c"/><rect x="89" y="78" width="10" height="10" fill="#6e4f28"/><rect x="100" y="78" width="10" height="10" fill="#5a3c1c"/><rect x="111" y="78" width="10" height="10" fill="#ffffff"/><rect x="122" y="78" width="10" height="10" fill="#ffffcc"/><rect x="133" y="78" width="10" height="10" fill="#ffff99"/><rect x="144" y="78" width="10" height="10" fill="#ffff66"/><rect x="155" y="78" width="10" height="10" fill="#ffff33"/><rect x="166" y="78" width="10" height="10" fill="#ffff00"/><rect x="1" y="89" width="10" height="10" fill="#ffdd44"/><rect x="12" y="89" width="10" height="10" fill="#ffccff"/><rect x="23" y="89" width="10" height="10" fill="#ffcccc"/><rect x="34" y="89" width="10" height="10" fill="#ffcc99"/><rect x="45" y="89" width="10" height="10" fill="#ffcc66"/><rect x="56" y="89" width="10" height="10" fill="#ffcc33"/><rect x="67" y="89" width="10" height="10" fill="#ffcc00"/><rect x="78" y="89" width="10" height="10" fill="#ffaa22"/><rect x="89" y="89" width="10" height="10" fill="#ff99ff"/><rect x="100" y="89" width="10" height="10" fill="#ff99cc"/><rect x="111" y="89" width="10" height="10" fill="#ff9999"/><rect x="122" y="89" width="10" height="10" fill="#ff9966"/><rect x="133" y="89" width="10" height="10" fill="#ff9933"/><rect x="144" y="89" width="10" height="10" fill="#ff9900"/><rect x="155" y="89" width="10" height="10" fill="#ff66ff"/><rect x="166" y="89" width="10" height="10" fill="#ff66cc"/><rect x="1" y="100" width="10" height="10" fill="#ff6699"/><rect x="12" y="100" width="10" height="10" fill="#ff6666"/><rect x="23" y="100" width="10" height="10" fill="#ff6633"/><rect x="34" y="100" width="10" height="10" fill="#ff6600"/><rect x="45" y="100" width="10" height="10" fill="#ff33cc"/><rect x="56" y="100" width="10" height="10" fill="#ff3399"/><rect x="67" y="100" width="10" height="10" fill="#ff3366"/><rect x="78" y="100" width="10" height="10" fill="#ff3333"/><rect x="89" y="100" width="10" height="10" fill="#ff3300"/><rect x="100" y="100" width="10" height="10" fill="#ff00ff"/><rect x="111" y="100" width="10" height="10" fill="#ff00cc"/><rect x="122" y="100" width="10" height="10" fill="#ff0099"/><rect x="133" y="100" width="10" height="10" fill="#ff0066"/><rect x="144" y="100" width="10" height="10" fill="#ff0033"/><rect x="155" y="100" width="10" height="10" fill="#ff0000"/><rect x="166" y="100" width="10" height="10" fill="#f5f5f5"/></svg>
<div style="left:1564px;top:410px;width:47px;height:21px;background:#424242;border:1px solid #333333;box-sizing:border-box;"></div>
<div style="left:1621px;top:410px;width:57px;height:21px;background:#4a4a4a;border:1px solid #4a4a4a;box-sizing:border-box;"></div>
<div style="left:1688px;top:410px;width:52px;height:21px;background:#424242;border:1px solid #333333;box-sizing:border-box;"></div>
<div style="left:1550px;top:439px;width:14px;height:14px;background:#424242;border:1px solid #3a3a3a;box-sizing:border-box;"></div>
<div style="left:1604px;top:439px;width:14px;height:14px;background:#424242;border:1px solid #3a3a3a;box-sizing:border-box;"></div>
<svg style="left:1604px;top:437px;" width="16" height="16" viewBox="0 0 16 16"><path d="M3 8 L6.5 13.5 L13 2.5" fill="none" stroke="#d8992b" stroke-width="2.2"/></svg>
<div style="left:1543px;top:464px;width:370px;height:19px;background:#414141;border:1px solid #2b2b2b;box-sizing:border-box;"></div>
<div style="left:1544px;top:483px;width:21px;height:18px;background:#424242;border:1px solid #363636;box-sizing:border-box;"></div>
<div style="left:1568px;top:483px;width:21px;height:18px;background:#424242;border:1px solid #363636;box-sizing:border-box;"></div>
<div style="left:1593px;top:483px;width:21px;height:18px;background:#424242;border:1px solid #363636;box-sizing:border-box;"></div>
<div style="left:1618px;top:483px;width:21px;height:18px;background:#424242;border:1px solid #363636;box-sizing:border-box;"></div>
<div style="left:1643px;top:483px;width:21px;height:18px;background:#424242;border:1px solid #363636;box-sizing:border-box;"></div>
<div style="left:1668px;top:483px;width:21px;height:18px;background:#424242;border:1px solid #363636;box-sizing:border-box;"></div>
<svg style="left:1545px;top:484px;" width="20" height="16" viewBox="0 0 20 16"><path d="M2.5 12.5 V6.5 L5.5 3.5 H10.5 V12.5Z" fill="none" stroke="#e0e0e0" stroke-width="1.3"/><path d="M14 4 V12 M10 8 H18" stroke="#d8992b" stroke-width="1.8"/></svg>
<svg style="left:1569px;top:484px;" width="20" height="16" viewBox="0 0 20 16"><path d="M5 11.5 V3.8 L7.5 1.5 H12 V11.5Z" fill="none" stroke="#e0e0e0" stroke-width="1.2"/><path d="M7.5 14.5 V6.8 L10 4.5 H15 V14.5Z" fill="#424242" stroke="#e0e0e0" stroke-width="1.2"/></svg>
<svg style="left:1594px;top:484px;" width="20" height="16" viewBox="0 0 20 16"><path d="M2.5 12.5 V6.5 L5.5 3.5 H10.5 V12.5Z" fill="none" stroke="#e0e0e0" stroke-width="1.3"/><path d="M9 8.5 H15" stroke="#d8992b" stroke-width="1.8"/><path d="M18.5 8.5 L14.5 5 V12Z" fill="#d8992b"/></svg>
<svg style="left:1619px;top:484px;" width="20" height="16" viewBox="0 0 20 16"><path d="M5.5 5 H14.5 M8 4.5 V2.8 H12 V4.5" fill="none" stroke="#e0e0e0" stroke-width="1.3"/><path d="M6.5 6.5 H13.5 V14 H6.5Z" fill="#e0e0e0"/><path d="M8.7 7.5 V13 M11.3 7.5 V13" stroke="#424242" stroke-width="1"/></svg>
<svg style="left:1644px;top:484px;" width="20" height="16" viewBox="0 0 20 16"><circle cx="5.5" cy="8.5" r="1.4" fill="#e0e0e0"/><circle cx="10" cy="8.5" r="1.4" fill="#e0e0e0"/><circle cx="14.5" cy="8.5" r="1.4" fill="#e0e0e0"/></svg>
<svg style="left:1669px;top:484px;" width="20" height="16" viewBox="0 0 20 16"><rect x="4" y="2" width="8" height="8" rx="2" fill="none" stroke="#e0e0e0" stroke-width="1.2"/><rect x="6" y="4" width="8" height="8" rx="2" fill="#424242" stroke="#e0e0e0" stroke-width="1.2"/><rect x="8" y="6" width="8" height="8" rx="2" fill="#424242" stroke="#e0e0e0" stroke-width="1.2"/></svg>
<div style="left:1894px;top:483px;width:17px;height:18px;background:#424242;border:1px solid #363636;box-sizing:border-box;"></div>
<svg style="left:1896px;top:487px;" width="13" height="10" viewBox="0 0 13 10"><path d="M2 8 L6.5 3 L11 8" fill="none" stroke="#e0e0e0" stroke-width="2.2"/></svg>
<div style="left:1544px;top:504px;width:144px;height:22px;background:#424242;border:1px solid #333333;box-sizing:border-box;"></div>
<svg style="left:1672px;top:511.0px;" width="10" height="8" viewBox="0 0 10 8"><path d="M1 1 L9 1 L5 7.5Z" fill="#9a9a9a"/></svg>
<div style="left:1692px;top:505px;width:215px;height:21px;background:#e6e6e6;border:1px solid #3a3a3a;box-sizing:border-box;"></div>
<div style="left:1544px;top:530px;width:369px;height:23px;background:#414141;border:1px solid #2b2b2b;box-sizing:border-box;"></div>
<div style="left:1573px;top:531px;width:1px;height:21px;background:#333333;"></div>
<div style="left:1599px;top:531px;width:1px;height:21px;background:#333333;"></div>
<div style="left:1825px;top:531px;width:1px;height:21px;background:#333333;"></div>
<div style="left:1851px;top:531px;width:1px;height:21px;background:#333333;"></div>
<div style="left:1874px;top:531px;width:1px;height:21px;background:#333333;"></div>
<svg style="left:1553px;top:537px;" width="12" height="8" viewBox="0 0 12 8"><ellipse cx="3.4" cy="4" rx="2.7" ry="3" fill="#e0e0e0"/><ellipse cx="8.6" cy="4" rx="2.7" ry="3" fill="#e0e0e0"/><circle cx="4.2" cy="4.4" r="1.3" fill="#222"/><circle cx="9.4" cy="4.4" r="1.3" fill="#222"/></svg>
<svg style="left:1580px;top:535px;" width="12" height="13" viewBox="0 0 12 13"><circle cx="6" cy="7.5" r="3.8" fill="none" stroke="#e0e0e0" stroke-width="1.3"/><path d="M4.2 1.6 H7.8 M6 2 V4 M6 7.5 L7.6 5.8" stroke="#e0e0e0" stroke-width="1.2" fill="none"/></svg>
<svg style="left:1833px;top:536px;opacity:.95;" width="10" height="10" viewBox="0 0 10 10"><rect x="0" y="0" width="5" height="5" fill="#7cc576"/><rect x="5" y="0" width="5" height="5" fill="#fff45c"/><rect x="0" y="5" width="5" height="5" fill="#5fc5ea"/><rect x="5" y="5" width="5" height="5" fill="#f9a13a"/></svg>
<svg style="left:1858px;top:538px;" width="10" height="7" viewBox="0 0 10 7"><path d="M.8 .8 H9.2 L5 6.2Z" fill="#e0e0e0"/></svg>
<svg style="left:0px;top:0px;" width="1920" height="1050" viewBox="0 0 1920 1050"><rect x="1544" y="553" width="347" height="22" fill="#484848"/><rect x="1551.5" y="556.5" width="18" height="15" fill="#6a6a6a" stroke="#333" stroke-width="1"/><rect x="1579.5" y="558.5" width="13" height="13" fill="#464646" stroke="#3a3a3a" stroke-width="1"/><rect x="1832.5" y="558.5" width="11" height="11" fill="#777777" stroke="#3a3a3a" stroke-width="1"/><path d="M1623.5 565 q-1 -5 4 -5.2 q2.5 0 4.5 -1.2 q3.5 -1.5 4.2 2 q.5 5.5 -5 7.4 q-6.5 1.6 -7.7 -3Z" fill="none" stroke="#7e7e7e" stroke-width="1.4"/><rect x="1544" y="575" width="347" height="22" fill="#555555"/><rect x="1551.5" y="578.5" width="18" height="15" fill="#6a6a6a" stroke="#333" stroke-width="1"/><ellipse cx="1556.1" cy="585.8" rx="3.1" ry="3.9" fill="#fff" stroke="#111" stroke-width="1.3"/><ellipse cx="1563.1" cy="586.1" rx="4.1" ry="4.6" fill="#fff" stroke="#111" stroke-width="1.3"/><circle cx="1556.4" cy="587.2" r="1.4" fill="#111"/><circle cx="1562.5" cy="587.4" r="1.9" fill="#111"/><rect x="1579.5" y="580.5" width="13" height="13" fill="#464646" stroke="#3a3a3a" stroke-width="1"/><rect x="1832.5" y="580.5" width="11" height="11" fill="#777777" stroke="#3a3a3a" stroke-width="1"/><g opacity="1"><rect x="1622.5" y="578.5" width="15" height="15" rx="1.5" fill="#bfe6f7" stroke="#e8e8e8" stroke-width="1"/><circle cx="1626.5" cy="582.5" r="1.7" fill="#f4d84a"/><path d="M1623 587.5 l4 -3.5 l3 2.5 l3.5 -3.5 l3.5 3 v6.5 h-14Z" fill="#1f9a55"/></g><rect x="1544" y="597" width="347" height="22" fill="#484848"/><rect x="1551.5" y="600.5" width="18" height="15" fill="#6a6a6a" stroke="#333" stroke-width="1"/><rect x="1579.5" y="602.5" width="13" height="13" fill="#464646" stroke="#3a3a3a" stroke-width="1"/><rect x="1832.5" y="602.5" width="11" height="11" fill="#777777" stroke="#3a3a3a" stroke-width="1"/><g opacity=".45"><rect x="1622.5" y="600.5" width="15" height="15" rx="1.5" fill="#bfe6f7" stroke="#e8e8e8" stroke-width="1"/><circle cx="1626.5" cy="604.5" r="1.7" fill="#f4d84a"/><path d="M1623 609.5 l4 -3.5 l3 2.5 l3.5 -3.5 l3.5 3 v6.5 h-14Z" fill="#1f9a55"/></g><rect x="1544" y="619" width="347" height="22" fill="#555555"/><rect x="1551.5" y="622.5" width="18" height="15" fill="#6a6a6a" stroke="#333" stroke-width="1"/><ellipse cx="1556.1" cy="629.8" rx="3.1" ry="3.9" fill="#fff" stroke="#111" stroke-width="1.3"/><ellipse cx="1563.1" cy="630.1" rx="4.1" ry="4.6" fill="#fff" stroke="#111" stroke-width="1.3"/><circle cx="1556.4" cy="631.2" r="1.4" fill="#111"/><circle cx="1562.5" cy="631.4" r="1.9" fill="#111"/><rect x="1579.5" y="624.5" width="13" height="13" fill="#464646" stroke="#3a3a3a" stroke-width="1"/><path d="M1581.5 630.5 L1585 636 L1591.5 624" fill="none" stroke="#d8992b" stroke-width="2.2"/><rect x="1832.5" y="624.5" width="11" height="11" fill="#777777" stroke="#3a3a3a" stroke-width="1"/><path d="M1607.5 626 h9 l-4.5 8Z" fill="#e0e0e0"/><path d="M1622.7 635.5 v-10 h2.5 l1 -2 h5 l1 2 h5 v10Z" fill="none" stroke="#e0e0e0" stroke-width="1.3"/><rect x="1544" y="641" width="347" height="22" fill="#484848"/><rect x="1551.5" y="644.5" width="18" height="15" fill="#6a6a6a" stroke="#333" stroke-width="1"/><ellipse cx="1556.1" cy="651.8" rx="3.1" ry="3.9" fill="#fff" stroke="#111" stroke-width="1.3"/><ellipse cx="1563.1" cy="652.1" rx="4.1" ry="4.6" fill="#fff" stroke="#111" stroke-width="1.3"/><circle cx="1556.4" cy="653.2" r="1.4" fill="#111"/><circle cx="1562.5" cy="653.4" r="1.9" fill="#111"/><rect x="1579.5" y="646.5" width="13" height="13" fill="#464646" stroke="#3a3a3a" stroke-width="1"/><rect x="1832.5" y="646.5" width="11" height="11" fill="#777777" stroke="#3a3a3a" stroke-width="1"/><path d="M1638.5 653 q-1 -5 4 -5.2 q2.5 0 4.5 -1.2 q3.5 -1.5 4.2 2 q.5 5.5 -5 7.4 q-6.5 1.6 -7.7 -3Z" fill="none" stroke="#e0e0e0" stroke-width="1.4"/><rect x="1544" y="663" width="347" height="22" fill="#555555"/><rect x="1551.5" y="666.5" width="18" height="15" fill="#6a6a6a" stroke="#333" stroke-width="1"/><ellipse cx="1556.1" cy="673.8" rx="3.1" ry="3.9" fill="#fff" stroke="#111" stroke-width="1.3"/><ellipse cx="1563.1" cy="674.1" rx="4.1" ry="4.6" fill="#fff" stroke="#111" stroke-width="1.3"/><circle cx="1556.4" cy="675.2" r="1.4" fill="#111"/><circle cx="1562.5" cy="675.4" r="1.9" fill="#111"/><rect x="1579.5" y="668.5" width="13" height="13" fill="#464646" stroke="#3a3a3a" stroke-width="1"/><rect x="1832.5" y="668.5" width="11" height="11" fill="#777777" stroke="#3a3a3a" stroke-width="1"/><path d="M1638.5 675 q-1 -5 4 -5.2 q2.5 0 4.5 -1.2 q3.5 -1.5 4.2 2 q.5 5.5 -5 7.4 q-6.5 1.6 -7.7 -3Z" fill="none" stroke="#e0e0e0" stroke-width="1.4"/><rect x="1544" y="685" width="347" height="22" fill="#484848"/><rect x="1551.5" y="688.5" width="18" height="15" fill="#6a6a6a" stroke="#333" stroke-width="1"/><ellipse cx="1556.1" cy="695.8" rx="3.1" ry="3.9" fill="#fff" stroke="#111" stroke-width="1.3"/><ellipse cx="1563.1" cy="696.1" rx="4.1" ry="4.6" fill="#fff" stroke="#111" stroke-width="1.3"/><circle cx="1556.4" cy="697.2" r="1.4" fill="#111"/><circle cx="1562.5" cy="697.4" r="1.9" fill="#111"/><rect x="1579.5" y="690.5" width="13" height="13" fill="#464646" stroke="#3a3a3a" stroke-width="1"/><rect x="1832.5" y="690.5" width="11" height="11" fill="#777777" stroke="#3a3a3a" stroke-width="1"/><path d="M1638.5 697 q-1 -5 4 -5.2 q2.5 0 4.5 -1.2 q3.5 -1.5 4.2 2 q.5 5.5 -5 7.4 q-6.5 1.6 -7.7 -3Z" fill="none" stroke="#e0e0e0" stroke-width="1.4"/><rect x="1544" y="707" width="347" height="22" fill="#555555"/><rect x="1551.5" y="710.5" width="18" height="15" fill="#6a6a6a" stroke="#333" stroke-width="1"/><ellipse cx="1556.1" cy="717.8" rx="3.1" ry="3.9" fill="#fff" stroke="#111" stroke-width="1.3"/><ellipse cx="1563.1" cy="718.1" rx="4.1" ry="4.6" fill="#fff" stroke="#111" stroke-width="1.3"/><circle cx="1556.4" cy="719.2" r="1.4" fill="#111"/><circle cx="1562.5" cy="719.4" r="1.9" fill="#111"/><rect x="1579.5" y="712.5" width="13" height="13" fill="#464646" stroke="#3a3a3a" stroke-width="1"/><rect x="1832.5" y="712.5" width="11" height="11" fill="#777777" stroke="#3a3a3a" stroke-width="1"/><path d="M1622.5 714 h9 l-4.5 8Z" fill="#e0e0e0"/><path d="M1638.6 718 q-1.4 -2.8 1.4 -2.8 q1.6 0 1.8 1.5 h5.4 q.2 -1.5 1.8 -1.5 q2.8 0 1.4 2.8 q1.4 2.8 -1.4 2.8 q-1.6 0 -1.8 -1.5 h-5.4 q-.2 1.5 -1.8 1.5 q-2.8 0 -1.4 -2.8Z" fill="none" stroke="#e0e0e0" stroke-width="1.2"/><rect x="1544" y="729" width="347" height="22" fill="#c99329"/><rect x="1551.5" y="732.5" width="18" height="15" fill="#6a6a6a" stroke="#333" stroke-width="1"/><ellipse cx="1556.1" cy="739.8" rx="3.1" ry="3.9" fill="#fff" stroke="#111" stroke-width="1.3"/><ellipse cx="1563.1" cy="740.1" rx="4.1" ry="4.6" fill="#fff" stroke="#111" stroke-width="1.3"/><circle cx="1556.4" cy="741.2" r="1.4" fill="#111"/><circle cx="1562.5" cy="741.4" r="1.9" fill="#111"/><rect x="1579.5" y="734.5" width="13" height="13" fill="#464646" stroke="#3a3a3a" stroke-width="1"/><rect x="1832.5" y="734.5" width="11" height="11" fill="#777777" stroke="#3a3a3a" stroke-width="1"/><path d="M1653.5 741 q-1 -5 4 -5.2 q2.5 0 4.5 -1.2 q3.5 -1.5 4.2 2 q.5 5.5 -5 7.4 q-6.5 1.6 -7.7 -3Z" fill="none" stroke="#e0e0e0" stroke-width="1.4"/><path d="M1858.5 737 h9 l-4.5 6Z" fill="#fff"/><rect x="1544" y="751" width="347" height="22" fill="#555555"/><rect x="1551.5" y="754.5" width="18" height="15" fill="#6a6a6a" stroke="#333" stroke-width="1"/><ellipse cx="1556.1" cy="761.8" rx="3.1" ry="3.9" fill="#fff" stroke="#111" stroke-width="1.3"/><ellipse cx="1563.1" cy="762.1" rx="4.1" ry="4.6" fill="#fff" stroke="#111" stroke-width="1.3"/><circle cx="1556.4" cy="763.2" r="1.4" fill="#111"/><circle cx="1562.5" cy="763.4" r="1.9" fill="#111"/><rect x="1579.5" y="756.5" width="13" height="13" fill="#464646" stroke="#3a3a3a" stroke-width="1"/><rect x="1832.5" y="756.5" width="11" height="11" fill="#777777" stroke="#3a3a3a" stroke-width="1"/><path d="M1653.5 763 q-1 -5 4 -5.2 q2.5 0 4.5 -1.2 q3.5 -1.5 4.2 2 q.5 5.5 -5 7.4 q-6.5 1.6 -7.7 -3Z" fill="none" stroke="#e0e0e0" stroke-width="1.4"/><rect x="1544" y="773" width="347" height="22" fill="#484848"/><rect x="1551.5" y="776.5" width="18" height="15" fill="#6a6a6a" stroke="#333" stroke-width="1"/><ellipse cx="1556.1" cy="783.8" rx="3.1" ry="3.9" fill="#fff" stroke="#111" stroke-width="1.3"/><ellipse cx="1563.1" cy="784.1" rx="4.1" ry="4.6" fill="#fff" stroke="#111" stroke-width="1.3"/><circle cx="1556.4" cy="785.2" r="1.4" fill="#111"/><circle cx="1562.5" cy="785.4" r="1.9" fill="#111"/><rect x="1579.5" y="778.5" width="13" height="13" fill="#464646" stroke="#3a3a3a" stroke-width="1"/><rect x="1832.5" y="778.5" width="11" height="11" fill="#777777" stroke="#3a3a3a" stroke-width="1"/><path d="M1638.5 785 q-1 -5 4 -5.2 q2.5 0 4.5 -1.2 q3.5 -1.5 4.2 2 q.5 5.5 -5 7.4 q-6.5 1.6 -7.7 -3Z" fill="none" stroke="#e0e0e0" stroke-width="1.4"/><rect x="1544" y="795" width="347" height="22" fill="#555555"/><rect x="1551.5" y="798.5" width="18" height="15" fill="#6a6a6a" stroke="#333" stroke-width="1"/><ellipse cx="1556.1" cy="805.8" rx="3.1" ry="3.9" fill="#fff" stroke="#111" stroke-width="1.3"/><ellipse cx="1563.1" cy="806.1" rx="4.1" ry="4.6" fill="#fff" stroke="#111" stroke-width="1.3"/><circle cx="1556.4" cy="807.2" r="1.4" fill="#111"/><circle cx="1562.5" cy="807.4" r="1.9" fill="#111"/><rect x="1579.5" y="800.5" width="13" height="13" fill="#464646" stroke="#3a3a3a" stroke-width="1"/><rect x="1832.5" y="800.5" width="11" height="11" fill="#777777" stroke="#3a3a3a" stroke-width="1"/><path d="M1622.5 802 h9 l-4.5 8Z" fill="#e0e0e0"/><path d="M1638.6 806 q-1.4 -2.8 1.4 -2.8 q1.6 0 1.8 1.5 h5.4 q.2 -1.5 1.8 -1.5 q2.8 0 1.4 2.8 q1.4 2.8 -1.4 2.8 q-1.6 0 -1.8 -1.5 h-5.4 q-.2 1.5 -1.8 1.5 q-2.8 0 -1.4 -2.8Z" fill="none" stroke="#e0e0e0" stroke-width="1.2"/><rect x="1544" y="817" width="347" height="22" fill="#484848"/><rect x="1551.5" y="820.5" width="18" height="15" fill="#6a6a6a" stroke="#333" stroke-width="1"/><ellipse cx="1556.1" cy="827.8" rx="3.1" ry="3.9" fill="#fff" stroke="#111" stroke-width="1.3"/><ellipse cx="1563.1" cy="828.1" rx="4.1" ry="4.6" fill="#fff" stroke="#111" stroke-width="1.3"/><circle cx="1556.4" cy="829.2" r="1.4" fill="#111"/><circle cx="1562.5" cy="829.4" r="1.9" fill="#111"/><rect x="1579.5" y="822.5" width="13" height="13" fill="#464646" stroke="#3a3a3a" stroke-width="1"/><rect x="1832.5" y="822.5" width="11" height="11" fill="#777777" stroke="#3a3a3a" stroke-width="1"/><path d="M1653.5 829 q-1 -5 4 -5.2 q2.5 0 4.5 -1.2 q3.5 -1.5 4.2 2 q.5 5.5 -5 7.4 q-6.5 1.6 -7.7 -3Z" fill="none" stroke="#e0e0e0" stroke-width="1.4"/><rect x="1544" y="839" width="347" height="22" fill="#555555"/><rect x="1551.5" y="842.5" width="18" height="15" fill="#6a6a6a" stroke="#333" stroke-width="1"/><ellipse cx="1556.1" cy="849.8" rx="3.1" ry="3.9" fill="#fff" stroke="#111" stroke-width="1.3"/><ellipse cx="1563.1" cy="850.1" rx="4.1" ry="4.6" fill="#fff" stroke="#111" stroke-width="1.3"/><circle cx="1556.4" cy="851.2" r="1.4" fill="#111"/><circle cx="1562.5" cy="851.4" r="1.9" fill="#111"/><rect x="1579.5" y="844.5" width="13" height="13" fill="#464646" stroke="#3a3a3a" stroke-width="1"/><rect x="1832.5" y="844.5" width="11" height="11" fill="#777777" stroke="#3a3a3a" stroke-width="1"/><path d="M1638.6 850 q-1.4 -2.8 1.4 -2.8 q1.6 0 1.8 1.5 h5.4 q.2 -1.5 1.8 -1.5 q2.8 0 1.4 2.8 q1.4 2.8 -1.4 2.8 q-1.6 0 -1.8 -1.5 h-5.4 q-.2 1.5 -1.8 1.5 q-2.8 0 -1.4 -2.8Z" fill="none" stroke="#e0e0e0" stroke-width="1.2"/><rect x="1544" y="861" width="347" height="22" fill="#484848"/><rect x="1551.5" y="864.5" width="18" height="15" fill="#6a6a6a" stroke="#333" stroke-width="1"/><ellipse cx="1556.1" cy="871.8" rx="3.1" ry="3.9" fill="#fff" stroke="#111" stroke-width="1.3"/><ellipse cx="1563.1" cy="872.1" rx="4.1" ry="4.6" fill="#fff" stroke="#111" stroke-width="1.3"/><circle cx="1556.4" cy="873.2" r="1.4" fill="#111"/><circle cx="1562.5" cy="873.4" r="1.9" fill="#111"/><rect x="1579.5" y="866.5" width="13" height="13" fill="#464646" stroke="#3a3a3a" stroke-width="1"/><rect x="1832.5" y="866.5" width="11" height="11" fill="#777777" stroke="#3a3a3a" stroke-width="1"/><path d="M1638.5 873 q-1 -5 4 -5.2 q2.5 0 4.5 -1.2 q3.5 -1.5 4.2 2 q.5 5.5 -5 7.4 q-6.5 1.6 -7.7 -3Z" fill="none" stroke="#e0e0e0" stroke-width="1.4"/><rect x="1544" y="883" width="347" height="22" fill="#555555"/><rect x="1551.5" y="886.5" width="18" height="15" fill="#6a6a6a" stroke="#333" stroke-width="1"/><ellipse cx="1556.1" cy="893.8" rx="3.1" ry="3.9" fill="#fff" stroke="#111" stroke-width="1.3"/><ellipse cx="1563.1" cy="894.1" rx="4.1" ry="4.6" fill="#fff" stroke="#111" stroke-width="1.3"/><circle cx="1556.4" cy="895.2" r="1.4" fill="#111"/><circle cx="1562.5" cy="895.4" r="1.9" fill="#111"/><rect x="1579.5" y="888.5" width="13" height="13" fill="#464646" stroke="#3a3a3a" stroke-width="1"/><rect x="1832.5" y="888.5" width="11" height="11" fill="#777777" stroke="#3a3a3a" stroke-width="1"/><path d="M1638.5 895 q-1 -5 4 -5.2 q2.5 0 4.5 -1.2 q3.5 -1.5 4.2 2 q.5 5.5 -5 7.4 q-6.5 1.6 -7.7 -3Z" fill="none" stroke="#e0e0e0" stroke-width="1.4"/><rect x="1544" y="905" width="347" height="22" fill="#484848"/><rect x="1551.5" y="908.5" width="18" height="15" fill="#6a6a6a" stroke="#333" stroke-width="1"/><ellipse cx="1556.1" cy="915.8" rx="3.1" ry="3.9" fill="#fff" stroke="#111" stroke-width="1.3"/><ellipse cx="1563.1" cy="916.1" rx="4.1" ry="4.6" fill="#fff" stroke="#111" stroke-width="1.3"/><circle cx="1556.4" cy="917.2" r="1.4" fill="#111"/><circle cx="1562.5" cy="917.4" r="1.9" fill="#111"/><rect x="1579.5" y="910.5" width="13" height="13" fill="#464646" stroke="#3a3a3a" stroke-width="1"/><rect x="1832.5" y="910.5" width="11" height="11" fill="#777777" stroke="#3a3a3a" stroke-width="1"/><path d="M1622.5 912 h9 l-4.5 8Z" fill="#e0e0e0"/><path d="M1638.6 916 q-1.4 -2.8 1.4 -2.8 q1.6 0 1.8 1.5 h5.4 q.2 -1.5 1.8 -1.5 q2.8 0 1.4 2.8 q1.4 2.8 -1.4 2.8 q-1.6 0 -1.8 -1.5 h-5.4 q-.2 1.5 -1.8 1.5 q-2.8 0 -1.4 -2.8Z" fill="none" stroke="#e0e0e0" stroke-width="1.2"/><rect x="1544" y="927" width="347" height="22" fill="#555555"/><rect x="1551.5" y="930.5" width="18" height="15" fill="#6a6a6a" stroke="#333" stroke-width="1"/><ellipse cx="1556.1" cy="937.8" rx="3.1" ry="3.9" fill="#fff" stroke="#111" stroke-width="1.3"/><ellipse cx="1563.1" cy="938.1" rx="4.1" ry="4.6" fill="#fff" stroke="#111" stroke-width="1.3"/><circle cx="1556.4" cy="939.2" r="1.4" fill="#111"/><circle cx="1562.5" cy="939.4" r="1.9" fill="#111"/><rect x="1579.5" y="932.5" width="13" height="13" fill="#464646" stroke="#3a3a3a" stroke-width="1"/><rect x="1832.5" y="932.5" width="11" height="11" fill="#777777" stroke="#3a3a3a" stroke-width="1"/><path d="M1653.5 939 q-1 -5 4 -5.2 q2.5 0 4.5 -1.2 q3.5 -1.5 4.2 2 q.5 5.5 -5 7.4 q-6.5 1.6 -7.7 -3Z" fill="none" stroke="#e0e0e0" stroke-width="1.4"/><rect x="1544" y="949" width="347" height="22" fill="#484848"/><rect x="1551.5" y="952.5" width="18" height="15" fill="#6a6a6a" stroke="#333" stroke-width="1"/><ellipse cx="1556.1" cy="959.8" rx="3.1" ry="3.9" fill="#fff" stroke="#111" stroke-width="1.3"/><ellipse cx="1563.1" cy="960.1" rx="4.1" ry="4.6" fill="#fff" stroke="#111" stroke-width="1.3"/><circle cx="1556.4" cy="961.2" r="1.4" fill="#111"/><circle cx="1562.5" cy="961.4" r="1.9" fill="#111"/><rect x="1579.5" y="954.5" width="13" height="13" fill="#464646" stroke="#3a3a3a" stroke-width="1"/><rect x="1832.5" y="954.5" width="11" height="11" fill="#777777" stroke="#3a3a3a" stroke-width="1"/><path d="M1622.5 956 h9 l-4.5 8Z" fill="#e0e0e0"/><path d="M1638.6 960 q-1.4 -2.8 1.4 -2.8 q1.6 0 1.8 1.5 h5.4 q.2 -1.5 1.8 -1.5 q2.8 0 1.4 2.8 q1.4 2.8 -1.4 2.8 q-1.6 0 -1.8 -1.5 h-5.4 q-.2 1.5 -1.8 1.5 q-2.8 0 -1.4 -2.8Z" fill="none" stroke="#e0e0e0" stroke-width="1.2"/><rect x="1544" y="971" width="347" height="22" fill="#555555"/><rect x="1551.5" y="974.5" width="18" height="15" fill="#6a6a6a" stroke="#333" stroke-width="1"/><ellipse cx="1556.1" cy="981.8" rx="3.1" ry="3.9" fill="#fff" stroke="#111" stroke-width="1.3"/><ellipse cx="1563.1" cy="982.1" rx="4.1" ry="4.6" fill="#fff" stroke="#111" stroke-width="1.3"/><circle cx="1556.4" cy="983.2" r="1.4" fill="#111"/><circle cx="1562.5" cy="983.4" r="1.9" fill="#111"/><rect x="1579.5" y="976.5" width="13" height="13" fill="#464646" stroke="#3a3a3a" stroke-width="1"/><rect x="1832.5" y="976.5" width="11" height="11" fill="#777777" stroke="#3a3a3a" stroke-width="1"/><path d="M1653.5 983 q-1 -5 4 -5.2 q2.5 0 4.5 -1.2 q3.5 -1.5 4.2 2 q.5 5.5 -5 7.4 q-6.5 1.6 -7.7 -3Z" fill="none" stroke="#e0e0e0" stroke-width="1.4"/><rect x="1544" y="993" width="347" height="22" fill="#484848"/><rect x="1551.5" y="996.5" width="18" height="15" fill="#6a6a6a" stroke="#333" stroke-width="1"/><rect x="1579.5" y="998.5" width="13" height="13" fill="#464646" stroke="#3a3a3a" stroke-width="1"/><rect x="1832.5" y="998.5" width="11" height="11" fill="#777777" stroke="#3a3a3a" stroke-width="1"/><g opacity=".45"><rect x="1622.5" y="996.5" width="15" height="15" rx="1.5" fill="#bfe6f7" stroke="#e8e8e8" stroke-width="1"/><circle cx="1626.5" cy="1000.5" r="1.7" fill="#f4d84a"/><path d="M1623 1005.5 l4 -3.5 l3 2.5 l3.5 -3.5 l3.5 3 v6.5 h-14Z" fill="#1f9a55"/></g><rect x="1544" y="1015" width="347" height="7" fill="#555555"/><rect x="1551.5" y="1017.5" width="18" height="6" fill="#6a6a6a" stroke="#333"/><rect x="1579.5" y="1019.5" width="13" height="4" fill="#424242"/><rect x="1622.5" y="1018.5" width="15" height="5" fill="#8fb0bb" opacity=".5"/><rect x="1832.5" y="1020.5" width="11" height="3" fill="#777"/></svg>
<div style="left:1891px;top:553px;width:21px;height:469px;background:#444444;border:1px solid #2b2b2b;box-sizing:border-box;"></div>
<div style="left:1892px;top:648px;width:18px;height:38px;background:#535353;"></div>
<div style="left:1892px;top:553px;width:18px;height:19px;background:#444444;border-bottom:1px solid #2b2b2b;"></div>
<svg style="left:1896px;top:558px;" width="10" height="9" viewBox="0 0 10 9"><path d="M5 .8 L9.2 8 H.8Z" fill="#8a8a8a"/></svg>
<div style="left:1892px;top:1002px;width:18px;height:19px;background:#444444;border-top:1px solid #2b2b2b;"></div>
<svg style="left:1896px;top:1008px;" width="10" height="9" viewBox="0 0 10 9"><path d="M.8 1 H9.2 L5 8.2Z" fill="#8a8a8a"/></svg>
<div style="left:1544px;top:1021px;width:368px;height:20px;background:#444444;border:1px solid #2b2b2b;box-sizing:border-box;"></div>
<div style="left:1544px;top:1021px;width:19px;height:20px;background:#444444;border:1px solid #2b2b2b;box-sizing:border-box;"></div>
<svg style="left:1549px;top:1026px;" width="9" height="10" viewBox="0 0 9 10"><path d="M8 .8 V9.2 L.8 5Z" fill="#8a8a8a"/></svg>
<div style="left:1873px;top:1021px;width:19px;height:20px;background:#444444;border:1px solid #2b2b2b;box-sizing:border-box;"></div>
<svg style="left:1879px;top:1026px;" width="9" height="10" viewBox="0 0 9 10"><path d="M1 .8 V9.2 L8.2 5Z" fill="#8a8a8a"/></svg>
<div style="left:1892px;top:1022px;width:19px;height:18px;background:#535353;"></div>
<div style="left:8px;top:798px;width:1529px;height:1px;background:#2b2b2b;"></div>
<div style="left:8px;top:824px;width:1529px;height:1px;background:#2b2b2b;"></div>
<div style="left:8px;top:828px;width:1529px;height:1px;background:#2b2b2b;"></div>
<div style="left:600px;top:803px;width:22px;height:19px;background:#4b4b4b;"></div>
<svg style="left:600px;top:803px;" width="22" height="19" viewBox="0 0 22 19"><circle cx="6" cy="9.5" r="3.3" fill="none" stroke="#6e6e6e" stroke-width="1.2"/><path d="M18 5 L11 9.5 L18 14Z" fill="none" stroke="#6e6e6e" stroke-width="1.3"/></svg>
<div style="left:625px;top:803px;width:22px;height:19px;background:#4b4b4b;"></div>
<svg style="left:625px;top:803px;" width="22" height="19" viewBox="0 0 22 19"><rect x="4.5" y="5" width="2.6" height="9" fill="none" stroke="#6e6e6e" stroke-width="1.1"/><path d="M17 5 L10 9.5 L17 14Z" fill="none" stroke="#6e6e6e" stroke-width="1.3"/></svg>
<div style="left:650px;top:803px;width:22px;height:19px;background:#4b4b4b;"></div>
<svg style="left:650px;top:803px;" width="22" height="19" viewBox="0 0 22 19"><path d="M10.5 5 L3.5 9.5 L10.5 14Z" fill="none" stroke="#6e6e6e" stroke-width="1.3"/><path d="M18 5 L11 9.5 L18 14Z" fill="none" stroke="#6e6e6e" stroke-width="1.3"/></svg>
<div style="left:675px;top:803px;width:22px;height:19px;background:#424242;border:1px solid #333333;box-sizing:border-box;"></div>
<svg style="left:675px;top:803px;" width="22" height="19" viewBox="0 0 22 19"><path d="M7.5 5 L14.5 9.5 L7.5 14Z" fill="none" stroke="#e0e0e0" stroke-width="1.3"/></svg>
<div style="left:700px;top:803px;width:22px;height:19px;background:#424242;border:1px solid #333333;box-sizing:border-box;"></div>
<svg style="left:700px;top:803px;" width="22" height="19" viewBox="0 0 22 19"><path d="M3.5 5 L10.5 9.5 L3.5 14Z" fill="none" stroke="#e0e0e0" stroke-width="1.3"/><path d="M11 5 L18 9.5 L11 14Z" fill="none" stroke="#e0e0e0" stroke-width="1.3"/></svg>
<div style="left:725px;top:803px;width:22px;height:19px;background:#424242;border:1px solid #333333;box-sizing:border-box;"></div>
<svg style="left:725px;top:803px;" width="22" height="19" viewBox="0 0 22 19"><path d="M4.5 5 L11.5 9.5 L4.5 14Z" fill="none" stroke="#e0e0e0" stroke-width="1.3"/><rect x="13.5" y="5" width="2.8" height="9" fill="none" stroke="#e0e0e0" stroke-width="1.2"/></svg>
<div style="left:750px;top:803px;width:22px;height:19px;background:#424242;border:1px solid #333333;box-sizing:border-box;"></div>
<svg style="left:750px;top:803px;" width="22" height="19" viewBox="0 0 22 19"><path d="M3 5 L10 9.5 L3 14Z" fill="none" stroke="#e0e0e0" stroke-width="1.3"/><circle cx="15" cy="9.5" r="3.6" fill="none" stroke="#e0e0e0" stroke-width="1.3"/></svg>
<div style="left:827px;top:802px;width:84px;height:21px;background:#e6e6e6;border:1px solid #3a3a3a;box-sizing:border-box;"></div>
<div style="left:928px;top:802px;width:84px;height:21px;background:#e6e6e6;border:1px solid #3a3a3a;box-sizing:border-box;"></div>
<div style="left:1024px;top:803px;width:22px;height:19px;background:#424242;border:1px solid #333333;box-sizing:border-box;"></div>
<svg style="left:1024px;top:803px;" width="22" height="19" viewBox="0 0 22 19"><path d="M5 7.5 H7.5 L11 4.5 V14.5 L7.5 11.5 H5Z" fill="none" stroke="#e0e0e0" stroke-width="1.2"/><path d="M13.5 7 Q15 9.5 13.5 12 M16 5 Q18.5 9.5 16 14" fill="none" stroke="#e0e0e0" stroke-width="1.2"/></svg>
<svg style="left:1333px;top:804px;" width="68" height="15" viewBox="0 0 68 15"><rect x=".7" y=".7" width="13.6" height="13.6" fill="none" stroke="#d8992b" stroke-width="1.4"/><rect x="17.6" y=".6" width="13.8" height="13.8" fill="#8a8a8a" stroke="#e0e0e0" stroke-width="1.2"/><path d="M24.5 .6 V14.4" stroke="#e0e0e0" stroke-width="1.2"/><rect x="34.6" y=".6" width="13.8" height="13.8" fill="#8a8a8a" stroke="#e0e0e0" stroke-width="1.2"/><path d="M34.6 7.5 H48.4" stroke="#e0e0e0" stroke-width="1.2"/><rect x="51.6" y=".6" width="13.8" height="13.8" fill="#8a8a8a" stroke="#e0e0e0" stroke-width="1.2"/><path d="M58.5 .6 V14.4 M51.6 7.5 H65.4" stroke="#e0e0e0" stroke-width="1.2"/></svg>
<div style="left:1409px;top:805px;width:14px;height:14px;background:#424242;border:1px solid #3a3a3a;box-sizing:border-box;"></div>
<svg style="left:1409px;top:803px;" width="16" height="16" viewBox="0 0 16 16"><path d="M3 8 L6.5 13.5 L13 2.5" fill="none" stroke="#d8992b" stroke-width="2.2"/></svg>
<svg style="left:1430px;top:804px;" width="15" height="15" viewBox="0 0 15 15"><rect x="2.5" y="2.5" width="9.5" height="10" fill="none" stroke="#e0e0e0" stroke-width="1.3"/><rect x=".8" y=".8" width="3.2" height="3.2" fill="#e0e0e0"/><rect x=".8" y="11" width="3.2" height="3.2" fill="#e0e0e0"/><rect x="10.6" y="11" width="3.2" height="3.2" fill="#e0e0e0"/><rect x="10.4" y=".4" width="3.8" height="3.8" fill="#d8992b"/></svg>
<div style="left:1450px;top:801px;width:86px;height:22px;background:#424242;border:1px solid #333333;box-sizing:border-box;"></div>
<svg style="left:1520px;top:808.0px;" width="10" height="8" viewBox="0 0 10 8"><path d="M1 1 L9 1 L5 7.5Z" fill="#9a9a9a"/></svg>
<div style="left:67px;top:832px;width:62px;height:21px;background:#535353;border:1px solid #3a3a3a;box-sizing:border-box;border-bottom:none;"></div>
<div style="left:128px;top:832px;width:63px;height:20px;background:#424242;border:1px solid #333;box-sizing:border-box;"></div>
<div style="left:190px;top:832px;width:84px;height:20px;background:#424242;border:1px solid #333;box-sizing:border-box;"></div>
<div style="left:306px;top:830px;width:100px;height:22px;background:#424242;border:1px solid #333333;box-sizing:border-box;"></div>
<svg style="left:390px;top:837.0px;" width="10" height="8" viewBox="0 0 10 8"><path d="M1 1 L9 1 L5 7.5Z" fill="#9a9a9a"/></svg>
<div style="left:409px;top:830px;width:40px;height:22px;background:#424242;border:1px solid #333333;box-sizing:border-box;"></div>
<svg style="left:433px;top:837px;" width="10" height="8" viewBox="0 0 10 8"><path d="M1 1 L9 1 L5 7.5Z" fill="#9a9a9a"/></svg>
<div style="left:453px;top:831px;width:23px;height:20px;background:#424242;border:1px solid #333333;box-sizing:border-box;"></div>
<svg style="left:455px;top:832px;" width="19" height="18" viewBox="0 0 19 18"><circle cx="11" cy="7.5" r="4.6" fill="none" stroke="#d8992b" stroke-width="1.6"/><circle cx="9" cy="9.5" r="4.6" fill="none" stroke="#d8992b" stroke-width="1.1" opacity=".7"/><circle cx="7.5" cy="11" r="4.6" fill="none" stroke="#d8992b" stroke-width="0.8" opacity=".45"/></svg>
<div style="left:479px;top:831px;width:102px;height:20px;background:#4b4b4b;border:1px solid #4b4b4b;box-sizing:border-box;"></div>
<svg style="left:564px;top:838px;" width="10" height="8" viewBox="0 0 10 8"><path d="M1 1 L9 1 L5 7.5Z" fill="#8a8a8a"/></svg>
<div style="left:588px;top:835px;width:14px;height:14px;background:#424242;border:1px solid #3a3a3a;box-sizing:border-box;"></div>
<div style="left:695px;top:831px;width:22px;height:20px;background:#424242;border:1px solid #333333;box-sizing:border-box;"></div>
<svg style="left:699px;top:834px;" width="14" height="14" viewBox="0 0 14 14"><path d="M3 2 H11 V8 L7 12.2 L3 8Z" fill="none" stroke="#d8992b" stroke-width="1.8"/></svg>
<div style="left:725px;top:835px;width:14px;height:14px;background:#424242;border:1px solid #3a3a3a;box-sizing:border-box;"></div>
<div style="left:1485px;top:832px;width:23px;height:18px;background:#424242;border:1px solid #333333;box-sizing:border-box;"></div>
<svg style="left:1489px;top:835.5px;" width="15" height="11" viewBox="0 0 15 11"><path d="M2 9 L7.5 2.5 L13 9Z M5.5 7.2 H9.5" fill="none" stroke="#d8992b" stroke-width="1.5"/></svg>
<div style="left:1511px;top:832px;width:23px;height:18px;background:#424242;border:1px solid #333333;box-sizing:border-box;"></div>
<svg style="left:1513px;top:835.5px;" width="19" height="11" viewBox="0 0 19 11"><path d="M1 9 H18 M1 9 L6 2.5 M18 9 L13 2.5 M3 6.6 H16" fill="none" stroke="#d8992b" stroke-width="1.4"/></svg>
<div style="left:14px;top:856px;width:15px;height:16px;background:#424242;border:1px solid #333;box-sizing:border-box;"></div>
<svg style="left:14px;top:857px;" width="14" height="14" viewBox="0 0 14 14"><path d="M3.5 10.5 L10.5 3.5 M6.5 3.5 H10.5 V7.5 M3.5 6.8 V10.5 H7.2" fill="none" stroke="#d8992b" stroke-width="1.2"/></svg>
<div style="left:49px;top:829px;width:1px;height:212px;background:#2b2b2b;"></div>
<svg style="left:0px;top:0px;" width="1920" height="1050" viewBox="0 0 1920 1050"><rect x="50" y="853" width="1467" height="17" fill="#434343"/><rect x="66" y="854" width="1451" height="16" fill="#8b6b33"/><rect x="50" y="870" width="1467" height="16" fill="#434343"/><rect x="50" y="886" width="1467" height="135" fill="#535353"/><path d="M58.5 866 V870" stroke="#e8dcc0" stroke-width="1"/><path d="M66.5 868 V870" stroke="#3a2c12" stroke-width="1"/><path d="M74.5 868 V870" stroke="#3a2c12" stroke-width="1"/><path d="M82.5 868 V870" stroke="#3a2c12" stroke-width="1"/><path d="M90.5 868 V870" stroke="#3a2c12" stroke-width="1"/><path d="M98.5 868 V870" stroke="#3a2c12" stroke-width="1"/><path d="M106.5 866 V870" stroke="#e8dcc0" stroke-width="1"/><path d="M114.5 868 V870" stroke="#3a2c12" stroke-width="1"/><path d="M122.5 868 V870" stroke="#3a2c12" stroke-width="1"/><path d="M130.5 868 V870" stroke="#3a2c12" stroke-width="1"/><path d="M138.5 868 V870" stroke="#3a2c12" stroke-width="1"/><path d="M146.5 868 V870" stroke="#3a2c12" stroke-width="1"/><path d="M154.5 866 V870" stroke="#e8dcc0" stroke-width="1"/><path d="M162.5 868 V870" stroke="#3a2c12" stroke-width="1"/><path d="M170.5 868 V870" stroke="#3a2c12" stroke-width="1"/><path d="M178.5 868 V870" stroke="#3a2c12" stroke-width="1"/><path d="M186.5 868 V870" stroke="#3a2c12" stroke-width="1"/><path d="M194.5 868 V870" stroke="#3a2c12" stroke-width="1"/><path d="M202.5 866 V870" stroke="#e8dcc0" stroke-width="1"/><path d="M210.5 868 V870" stroke="#3a2c12" stroke-width="1"/><path d="M218.5 868 V870" stroke="#3a2c12" stroke-width="1"/><path d="M226.5 868 V870" stroke="#3a2c12" stroke-width="1"/><path d="M234.5 868 V870" stroke="#3a2c12" stroke-width="1"/><path d="M242.5 868 V870" stroke="#3a2c12" stroke-width="1"/><path d="M250.5 866 V870" stroke="#e8dcc0" stroke-width="1"/><path d="M258.5 868 V870" stroke="#3a2c12" stroke-width="1"/><path d="M266.5 868 V870" stroke="#3a2c12" stroke-width="1"/><path d="M274.5 868 V870" stroke="#3a2c12" stroke-width="1"/><path d="M282.5 868 V870" stroke="#3a2c12" stroke-width="1"/><path d="M290.5 868 V870" stroke="#3a2c12" stroke-width="1"/><path d="M298.5 866 V870" stroke="#e8dcc0" stroke-width="1"/><path d="M306.5 868 V870" stroke="#3a2c12" stroke-width="1"/><path d="M314.5 868 V870" stroke="#3a2c12" stroke-width="1"/><path d="M322.5 868 V870" stroke="#3a2c12" stroke-width="1"/><path d="M330.5 868 V870" stroke="#3a2c12" stroke-width="1"/><path d="M338.5 868 V870" stroke="#3a2c12" stroke-width="1"/><path d="M346.5 866 V870" stroke="#e8dcc0" stroke-width="1"/><path d="M354.5 868 V870" stroke="#3a2c12" stroke-width="1"/><path d="M362.5 868 V870" stroke="#3a2c12" stroke-width="1"/><path d="M370.5 868 V870" stroke="#3a2c12" stroke-width="1"/><path d="M378.5 868 V870" stroke="#3a2c12" stroke-width="1"/><path d="M386.5 868 V870" stroke="#3a2c12" stroke-width="1"/><path d="M394.5 866 V870" stroke="#e8dcc0" stroke-width="1"/><path d="M402.5 868 V870" stroke="#3a2c12" stroke-width="1"/><path d="M410.5 868 V870" stroke="#3a2c12" stroke-width="1"/><path d="M418.5 868 V870" stroke="#3a2c12" stroke-width="1"/><path d="M426.5 868 V870" stroke="#3a2c12" stroke-width="1"/><path d="M434.5 868 V870" stroke="#3a2c12" stroke-width="1"/><path d="M442.5 866 V870" stroke="#e8dcc0" stroke-width="1"/><path d="M450.5 868 V870" stroke="#3a2c12" stroke-width="1"/><path d="M458.5 868 V870" stroke="#3a2c12" stroke-width="1"/><path d="M466.5 868 V870" stroke="#3a2c12" stroke-width="1"/><path d="M474.5 868 V870" stroke="#3a2c12" stroke-width="1"/><path d="M482.5 868 V870" stroke="#3a2c12" stroke-width="1"/><path d="M490.5 866 V870" stroke="#e8dcc0" stroke-width="1"/><path d="M498.5 868 V870" stroke="#3a2c12" stroke-width="1"/><path d="M506.5 868 V870" stroke="#3a2c12" stroke-width="1"/><path d="M514.5 868 V870" stroke="#3a2c12" stroke-width="1"/><path d="M522.5 868 V870" stroke="#3a2c12" stroke-width="1"/><path d="M530.5 868 V870" stroke="#3a2c12" stroke-width="1"/><path d="M538.5 866 V870" stroke="#e8dcc0" stroke-width="1"/><path d="M546.5 868 V870" stroke="#3a2c12" stroke-width="1"/><path d="M554.5 868 V870" stroke="#3a2c12" stroke-width="1"/><path d="M562.5 868 V870" stroke="#3a2c12" stroke-width="1"/><path d="M570.5 868 V870" stroke="#3a2c12" stroke-width="1"/><path d="M578.5 868 V870" stroke="#3a2c12" stroke-width="1"/><path d="M586.5 866 V870" stroke="#e8dcc0" stroke-width="1"/><path d="M594.5 868 V870" stroke="#3a2c12" stroke-width="1"/><path d="M602.5 868 V870" stroke="#3a2c12" stroke-width="1"/><path d="M610.5 868 V870" stroke="#3a2c12" stroke-width="1"/><path d="M618.5 868 V870" stroke="#3a2c12" stroke-width="1"/><path d="M626.5 868 V870" stroke="#3a2c12" stroke-width="1"/><path d="M634.5 866 V870" stroke="#e8dcc0" stroke-width="1"/><path d="M642.5 868 V870" stroke="#3a2c12" stroke-width="1"/><path d="M650.5 868 V870" stroke="#3a2c12" stroke-width="1"/><path d="M658.5 868 V870" stroke="#3a2c12" stroke-width="1"/><path d="M666.5 868 V870" stroke="#3a2c12" stroke-width="1"/><path d="M674.5 868 V870" stroke="#3a2c12" stroke-width="1"/><path d="M682.5 866 V870" stroke="#e8dcc0" stroke-width="1"/><path d="M690.5 868 V870" stroke="#3a2c12" stroke-width="1"/><path d="M698.5 868 V870" stroke="#3a2c12" stroke-width="1"/><path d="M706.5 868 V870" stroke="#3a2c12" stroke-width="1"/><path d="M714.5 868 V870" stroke="#3a2c12" stroke-width="1"/><path d="M722.5 868 V870" stroke="#3a2c12" stroke-width="1"/><path d="M730.5 866 V870" stroke="#e8dcc0" stroke-width="1"/><path d="M738.5 868 V870" stroke="#3a2c12" stroke-width="1"/><path d="M746.5 868 V870" stroke="#3a2c12" stroke-width="1"/><path d="M754.5 868 V870" stroke="#3a2c12" stroke-width="1"/><path d="M762.5 868 V870" stroke="#3a2c12" stroke-width="1"/><path d="M770.5 868 V870" stroke="#3a2c12" stroke-width="1"/><path d="M778.5 866 V870" stroke="#e8dcc0" stroke-width="1"/><path d="M786.5 868 V870" stroke="#3a2c12" stroke-width="1"/><path d="M794.5 868 V870" stroke="#3a2c12" stroke-width="1"/><path d="M802.5 868 V870" stroke="#3a2c12" stroke-width="1"/><path d="M810.5 868 V870" stroke="#3a2c12" stroke-width="1"/><path d="M818.5 868 V870" stroke="#3a2c12" stroke-width="1"/><path d="M826.5 866 V870" stroke="#e8dcc0" stroke-width="1"/><path d="M834.5 868 V870" stroke="#3a2c12" stroke-width="1"/><path d="M842.5 868 V870" stroke="#3a2c12" stroke-width="1"/><path d="M850.5 868 V870" stroke="#3a2c12" stroke-width="1"/><path d="M858.5 868 V870" stroke="#3a2c12" stroke-width="1"/><path d="M866.5 868 V870" stroke="#3a2c12" stroke-width="1"/><path d="M874.5 866 V870" stroke="#e8dcc0" stroke-width="1"/><path d="M882.5 868 V870" stroke="#3a2c12" stroke-width="1"/><path d="M890.5 868 V870" stroke="#3a2c12" stroke-width="1"/><path d="M898.5 868 V870" stroke="#3a2c12" stroke-width="1"/><path d="M906.5 868 V870" stroke="#3a2c12" stroke-width="1"/><path d="M914.5 868 V870" stroke="#3a2c12" stroke-width="1"/><path d="M922.5 866 V870" stroke="#e8dcc0" stroke-width="1"/><path d="M930.5 868 V870" stroke="#3a2c12" stroke-width="1"/><path d="M938.5 868 V870" stroke="#3a2c12" stroke-width="1"/><path d="M946.5 868 V870" stroke="#3a2c12" stroke-width="1"/><path d="M954.5 868 V870" stroke="#3a2c12" stroke-width="1"/><path d="M962.5 868 V870" stroke="#3a2c12" stroke-width="1"/><path d="M970.5 866 V870" stroke="#e8dcc0" stroke-width="1"/><path d="M978.5 868 V870" stroke="#3a2c12" stroke-width="1"/><path d="M986.5 868 V870" stroke="#3a2c12" stroke-width="1"/><path d="M994.5 868 V870" stroke="#3a2c12" stroke-width="1"/><path d="M1002.5 868 V870" stroke="#3a2c12" stroke-width="1"/><path d="M1010.5 868 V870" stroke="#3a2c12" stroke-width="1"/><path d="M1018.5 866 V870" stroke="#e8dcc0" stroke-width="1"/><path d="M1026.5 868 V870" stroke="#3a2c12" stroke-width="1"/><path d="M1034.5 868 V870" stroke="#3a2c12" stroke-width="1"/><path d="M1042.5 868 V870" stroke="#3a2c12" stroke-width="1"/><path d="M1050.5 868 V870" stroke="#3a2c12" stroke-width="1"/><path d="M1058.5 868 V870" stroke="#3a2c12" stroke-width="1"/><path d="M1066.5 866 V870" stroke="#e8dcc0" stroke-width="1"/><path d="M1074.5 868 V870" stroke="#3a2c12" stroke-width="1"/><path d="M1082.5 868 V870" stroke="#3a2c12" stroke-width="1"/><path d="M1090.5 868 V870" stroke="#3a2c12" stroke-width="1"/><path d="M1098.5 868 V870" stroke="#3a2c12" stroke-width="1"/><path d="M1106.5 868 V870" stroke="#3a2c12" stroke-width="1"/><path d="M1114.5 866 V870" stroke="#e8dcc0" stroke-width="1"/><path d="M1122.5 868 V870" stroke="#3a2c12" stroke-width="1"/><path d="M1130.5 868 V870" stroke="#3a2c12" stroke-width="1"/><path d="M1138.5 868 V870" stroke="#3a2c12" stroke-width="1"/><path d="M1146.5 868 V870" stroke="#3a2c12" stroke-width="1"/><path d="M1154.5 868 V870" stroke="#3a2c12" stroke-width="1"/><path d="M1162.5 866 V870" stroke="#e8dcc0" stroke-width="1"/><path d="M1170.5 868 V870" stroke="#3a2c12" stroke-width="1"/><path d="M1178.5 868 V870" stroke="#3a2c12" stroke-width="1"/><path d="M1186.5 868 V870" stroke="#3a2c12" stroke-width="1"/><path d="M1194.5 868 V870" stroke="#3a2c12" stroke-width="1"/><path d="M1202.5 868 V870" stroke="#3a2c12" stroke-width="1"/><path d="M1210.5 866 V870" stroke="#e8dcc0" stroke-width="1"/><path d="M1218.5 868 V870" stroke="#3a2c12" stroke-width="1"/><path d="M1226.5 868 V870" stroke="#3a2c12" stroke-width="1"/><path d="M1234.5 868 V870" stroke="#3a2c12" stroke-width="1"/><path d="M1242.5 868 V870" stroke="#3a2c12" stroke-width="1"/><path d="M1250.5 868 V870" stroke="#3a2c12" stroke-width="1"/><path d="M1258.5 866 V870" stroke="#e8dcc0" stroke-width="1"/><path d="M1266.5 868 V870" stroke="#3a2c12" stroke-width="1"/><path d="M1274.5 868 V870" stroke="#3a2c12" stroke-width="1"/><path d="M1282.5 868 V870" stroke="#3a2c12" stroke-width="1"/><path d="M1290.5 868 V870" stroke="#3a2c12" stroke-width="1"/><path d="M1298.5 868 V870" stroke="#3a2c12" stroke-width="1"/><path d="M1306.5 866 V870" stroke="#e8dcc0" stroke-width="1"/><path d="M1314.5 868 V870" stroke="#3a2c12" stroke-width="1"/><path d="M1322.5 868 V870" stroke="#3a2c12" stroke-width="1"/><path d="M1330.5 868 V870" stroke="#3a2c12" stroke-width="1"/><path d="M1338.5 868 V870" stroke="#3a2c12" stroke-width="1"/><path d="M1346.5 868 V870" stroke="#3a2c12" stroke-width="1"/><path d="M1354.5 866 V870" stroke="#e8dcc0" stroke-width="1"/><path d="M1362.5 868 V870" stroke="#3a2c12" stroke-width="1"/><path d="M1370.5 868 V870" stroke="#3a2c12" stroke-width="1"/><path d="M1378.5 868 V870" stroke="#3a2c12" stroke-width="1"/><path d="M1386.5 868 V870" stroke="#3a2c12" stroke-width="1"/><path d="M1394.5 868 V870" stroke="#3a2c12" stroke-width="1"/><path d="M1402.5 866 V870" stroke="#e8dcc0" stroke-width="1"/><path d="M1410.5 868 V870" stroke="#3a2c12" stroke-width="1"/><path d="M1418.5 868 V870" stroke="#3a2c12" stroke-width="1"/><path d="M1426.5 868 V870" stroke="#3a2c12" stroke-width="1"/><path d="M1434.5 868 V870" stroke="#3a2c12" stroke-width="1"/><path d="M1442.5 868 V870" stroke="#3a2c12" stroke-width="1"/><path d="M1450.5 866 V870" stroke="#e8dcc0" stroke-width="1"/><path d="M1458.5 868 V870" stroke="#3a2c12" stroke-width="1"/><path d="M1466.5 868 V870" stroke="#3a2c12" stroke-width="1"/><path d="M1474.5 868 V870" stroke="#3a2c12" stroke-width="1"/><path d="M1482.5 868 V870" stroke="#3a2c12" stroke-width="1"/><path d="M1490.5 868 V870" stroke="#3a2c12" stroke-width="1"/><path d="M1498.5 866 V870" stroke="#e8dcc0" stroke-width="1"/><path d="M1506.5 868 V870" stroke="#3a2c12" stroke-width="1"/><path d="M1514.5 868 V870" stroke="#3a2c12" stroke-width="1"/><path d="M250.5 901 V1021" stroke="#acacac" stroke-width="1.8"/><path d="M442.5 901 V1021" stroke="#acacac" stroke-width="1.8"/><path d="M634.5 901 V1021" stroke="#acacac" stroke-width="1.8"/><path d="M826.5 901 V1021" stroke="#acacac" stroke-width="1.8"/><path d="M1018.5 901 V1021" stroke="#acacac" stroke-width="1.8"/><path d="M1210.5 901 V1021" stroke="#acacac" stroke-width="1.8"/><path d="M1402.5 901 V1021" stroke="#acacac" stroke-width="1.8"/><path d="M58.5 866 V1021" stroke="#d8992b" stroke-width="1.4"/><path d="M54 865 H63 L58.5 870.5Z" fill="#d8992b"/><path d="M66 854.5 L84.5 862.5 L66 870Z" fill="#0a8a0a"/></svg>
<div style="left:1517px;top:853px;width:20px;height:169px;background:#444444;border:1px solid #2b2b2b;box-sizing:border-box;"></div>
<div style="left:1517px;top:853px;width:20px;height:18px;background:#444444;border:1px solid #2b2b2b;box-sizing:border-box;"></div>
<svg style="left:1522px;top:858px;" width="10" height="9" viewBox="0 0 10 9"><path d="M5 .8 L9.2 8 H.8Z" fill="#7c7c7c"/></svg>
<div style="left:1517px;top:1002px;width:20px;height:20px;background:#444444;border:1px solid #2b2b2b;box-sizing:border-box;"></div>
<svg style="left:1522px;top:1008px;" width="10" height="9" viewBox="0 0 10 9"><path d="M.8 1 H9.2 L5 8.2Z" fill="#7c7c7c"/></svg>
<div style="left:50px;top:1021px;width:1468px;height:20px;background:#444444;border:1px solid #2b2b2b;box-sizing:border-box;"></div>
<div style="left:50px;top:1021px;width:19px;height:20px;background:#444444;border:1px solid #2b2b2b;box-sizing:border-box;"></div>
<svg style="left:55px;top:1026px;" width="9" height="10" viewBox="0 0 9 10"><path d="M8 .8 V9.2 L.8 5Z" fill="#8a8a8a"/></svg>
<div style="left:1498px;top:1021px;width:20px;height:20px;background:#444444;border:1px solid #2b2b2b;box-sizing:border-box;"></div>
<svg style="left:1504px;top:1026px;" width="9" height="10" viewBox="0 0 9 10"><path d="M1 .8 V9.2 L8.2 5Z" fill="#8a8a8a"/></svg>
<div style="left:70px;top:1022px;width:39px;height:18px;background:#535353;"></div>
<div style="left:1518px;top:1022px;width:24px;height:19px;background:#535353;"></div>
<svg style="left:110px;top:132px;overflow:hidden;" width="1427" height="666" viewBox="110 132 1427 666"><rect x="110" y="132" width="1427" height="666" fill="#f0f0e2"/><path d="M181 131 L195.8 153.8 Q199 158.5 203.5 157.5 L209.5 154.6 Q213.5 152 212 147.5 L205 131Z" fill="#cc58c0"/><path d="M579 690 C575 715 572.5 740 572 762 C572 775 573 790 575 805 L711.5 805 L711.5 740 L650 690Z" fill="#000"/><path d="M594.5 705 C591.5 725 590.5 745 590.8 760 C591 775 592 790 593.5 805 L692.8 805 L692 740 L640 690Z" fill="#fff"/><path d="M713.4 740 L713.4 805 L854.5 805 C854.5 790 854 780 853.3 771.3 C852 760 851 752 849.4 743.1 C847 730 844 720 840 711.3 C837 703 833 697 829.7 692.5 L810 670 L760 690Z" fill="#000"/><path d="M733.3 740 L734.1 805 L836.5 805 C836 790 835.5 780 834.4 771.3 C833 760 831 751 828.8 743.1 C826 732 822 723 817.5 715 L800 690 L760 690Z" fill="#fff"/><path d="M552.0 360.0 C541.6 360.1 549.9 367.1 547.4 370.9 C544.9 374.7 540.1 378.6 537.1 382.9 C534.1 387.2 531.8 391.5 529.1 396.6 C526.4 401.7 523.6 408.0 521.1 413.7 C518.6 419.4 516.6 425.0 514.3 430.9 C512.0 436.8 509.6 443.2 507.4 449.1 C505.2 455.0 502.9 461.2 501.1 466.3 C499.3 471.4 497.6 475.2 496.6 480.0 C495.7 484.8 496.3 489.9 495.4 495.1 C494.5 500.3 493.4 505.4 491.4 511.1 C489.4 516.8 486.1 522.9 483.4 529.4 C480.7 535.9 477.6 543.5 475.4 550.0 C473.2 556.5 471.5 563.0 470.3 568.3 C469.1 573.6 468.3 577.8 468.0 582.0 C467.7 586.2 467.9 589.1 468.6 593.7 C469.3 598.3 470.3 604.4 472.0 609.7 C473.7 615.0 476.0 620.6 478.9 625.7 C481.8 630.9 485.3 636.4 489.1 640.6 C492.9 644.8 496.9 648.4 501.7 650.9 C506.5 653.4 512.2 655.0 517.7 655.4 C523.2 655.8 529.6 654.4 534.9 653.1 C540.2 651.8 542.2 654.6 549.7 647.4 C557.2 640.2 570.0 642.9 580.0 610.0 C590.0 577.1 605.0 490.0 610.0 450.0 C615.0 410.0 619.7 385.0 610.0 370.0 C600.3 355.0 562.4 359.9 552.0 360.0Z" fill="#000"/><path d="M582.0 364.0 C576.2 363.2 574.7 372.2 571.4 375.4 C568.1 378.5 565.3 379.8 562.3 382.9 C559.2 386.0 556.0 390.1 553.1 394.3 C550.2 398.5 547.6 403.1 545.1 408.0 C542.6 412.9 540.6 418.3 538.3 424.0 C536.0 429.7 533.7 436.2 531.4 442.3 C529.1 448.4 526.8 455.2 524.6 460.6 C522.4 466.1 519.5 471.5 518.0 475.0 C516.5 478.5 516.0 478.0 515.4 481.4 C514.8 484.8 514.9 490.5 514.3 495.1 C513.7 499.7 513.5 503.6 512.0 508.9 C510.5 514.2 507.6 521.0 505.1 527.1 C502.6 533.2 499.6 539.3 497.1 545.4 C494.6 551.5 492.0 558.2 490.3 563.7 C488.6 569.2 487.4 573.6 486.9 578.6 C486.4 583.6 486.6 588.7 487.4 593.7 C488.1 598.7 489.6 603.8 491.4 608.6 C493.2 613.4 495.8 618.5 498.3 622.3 C500.8 626.1 503.5 629.1 506.3 631.4 C509.1 633.7 512.0 635.4 515.4 636.0 C518.8 636.6 523.3 635.7 526.9 634.9 C530.5 634.1 531.6 634.7 537.1 631.4 C542.6 628.1 551.2 636.9 560.0 615.0 C568.8 593.1 582.3 539.2 590.0 500.0 C597.7 460.8 607.3 402.7 606.0 380.0 C604.7 357.3 587.8 364.8 582.0 364.0Z" fill="#fff"/><path d="M660.0 371.0 C635.0 370.8 630.1 372.6 620.0 374.0 C609.9 375.4 604.4 377.0 599.4 379.4 C594.4 381.8 593.0 385.2 589.7 388.6 C586.4 392.0 582.6 396.0 579.4 400.0 C576.2 404.0 573.1 408.2 570.3 412.6 C567.4 417.0 565.0 421.4 562.3 426.3 C559.6 431.2 556.8 436.6 554.3 442.3 C551.8 448.0 549.6 455.2 547.4 460.6 C545.2 466.1 542.9 470.6 541.0 475.0 C539.1 479.4 537.4 481.3 536.0 487.1 C534.6 492.9 533.5 503.3 532.6 510.0 C531.8 516.7 531.3 521.4 530.9 527.1 C530.5 532.8 530.3 538.6 530.3 544.3 C530.3 550.0 530.5 555.7 530.9 561.4 C531.3 567.1 531.9 572.6 532.6 578.6 C533.3 584.6 534.1 591.9 534.9 597.1 C535.6 602.3 535.9 604.4 537.1 609.7 C538.3 615.0 540.2 622.8 542.3 629.1 C544.4 635.4 547.7 642.2 549.7 647.4 C551.7 652.5 552.2 655.4 554.3 660.0 C556.4 664.6 559.4 670.1 562.3 674.9 C565.1 679.7 568.7 684.8 571.4 688.6 C574.1 692.4 574.4 693.5 578.3 697.7 C582.2 701.9 588.9 708.6 595.0 714.0 C601.1 719.4 604.8 724.2 615.0 730.0 C625.2 735.8 641.6 744.6 656.3 748.8 C671.0 753.0 688.1 755.3 703.1 755.3 C718.1 755.3 732.8 753.0 746.3 748.8 C759.8 744.6 771.2 737.5 783.8 730.0 C796.4 722.5 812.6 712.2 822.0 703.8 C831.4 695.4 833.3 690.0 840.0 679.4 C846.7 668.8 856.3 656.6 862.0 640.0 C867.7 623.4 872.3 600.0 874.0 580.0 C875.7 560.0 875.0 541.7 872.0 520.0 C869.0 498.3 864.3 470.0 856.0 450.0 C847.7 430.0 836.3 412.5 822.0 400.0 C807.7 387.5 797.0 379.8 770.0 375.0 C743.0 370.2 685.0 371.2 660.0 371.0Z" fill="#000"/><path d="M660.0 383.0 C639.2 382.2 646.9 381.2 640.0 381.0 C633.1 380.8 624.6 380.1 618.9 381.7 C613.2 383.3 609.8 387.5 605.7 390.9 C601.6 394.3 597.9 398.3 594.3 402.3 C590.7 406.3 587.2 410.5 584.0 414.9 C580.8 419.3 577.8 423.7 574.9 428.6 C572.0 433.6 569.6 438.9 566.9 444.6 C564.2 450.3 561.2 458.3 558.9 462.9 C556.6 467.5 554.8 468.3 553.1 472.0 C551.4 475.7 549.7 481.4 548.6 484.9 C547.5 488.4 547.1 487.5 546.3 492.9 C545.4 498.2 544.1 507.7 543.5 517.0 C542.9 526.3 542.3 538.2 542.5 548.7 C542.7 559.2 543.2 569.3 544.5 580.0 C545.8 590.7 548.5 604.9 550.3 613.1 C552.1 621.3 553.6 624.0 555.4 629.1 C557.2 634.2 558.8 638.9 561.1 644.0 C563.4 649.1 566.1 654.9 569.1 660.0 C572.1 665.1 576.0 670.3 579.4 674.9 C582.8 679.5 586.3 683.6 589.7 687.4 C593.1 691.2 595.8 693.6 600.0 697.7 C604.2 701.8 609.4 707.5 615.0 712.0 C620.6 716.5 625.1 720.2 633.8 724.4 C642.5 728.6 655.5 733.9 667.0 737.0 C678.5 740.1 691.8 742.9 703.1 743.1 C714.4 743.3 724.7 740.8 735.0 738.0 C745.3 735.2 755.7 730.5 765.0 726.3 C774.3 722.1 783.1 718.3 791.0 713.0 C798.9 707.7 805.3 702.2 812.5 694.4 C819.7 686.6 828.1 676.7 834.4 666.3 C840.6 655.9 845.6 646.4 850.0 632.0 C854.4 617.6 859.5 598.7 861.0 580.0 C862.5 561.3 861.8 540.8 859.0 520.0 C856.2 499.2 852.0 473.8 844.0 455.0 C836.0 436.2 824.2 418.5 811.0 407.0 C797.8 395.5 790.2 390.0 765.0 386.0 C739.8 382.0 680.8 383.8 660.0 383.0Z" fill="#ffffcc"/><path d="M540.2 496.7 C541.9 492.4 546.2 492.8 549.1 492.7 C552.1 492.5 556.4 493.9 558.1 495.9 C559.7 497.9 557.1 504.8 558.9 504.8 C560.6 504.8 564.0 498.0 568.6 495.9 C573.2 493.8 581.0 492.1 586.4 492.3 C591.8 492.6 597.2 494.6 601.0 497.5 C604.7 500.4 605.5 509.5 608.7 509.7 C612.0 509.8 615.5 500.8 620.4 498.3 C625.3 495.9 632.8 494.5 638.2 494.8 C643.6 495.0 649.0 496.5 652.8 500.0 C656.6 503.4 659.1 508.2 660.9 515.3 C662.7 522.5 663.6 531.5 663.6 542.9 C663.7 554.2 661.9 571.5 661.2 583.3 C660.5 595.2 661.8 608.3 659.6 614.1 C657.4 619.9 651.7 618.3 647.9 618.3 C644.1 618.3 638.4 622.6 636.9 614.1 C635.4 605.6 638.2 579.8 638.7 567.2 C639.2 554.5 640.1 544.8 639.8 538.0 C639.5 531.3 638.5 529.2 636.9 526.7 C635.3 524.1 632.8 522.4 630.1 522.6 C627.4 522.8 623.5 524.9 620.7 528.0 C617.9 531.1 615.1 534.7 613.4 541.2 C611.8 547.8 611.5 555.3 610.7 567.2 C609.8 579.0 610.5 604.3 608.2 612.5 C606.0 620.6 600.7 616.2 596.9 616.0 C593.1 615.9 587.1 619.8 585.6 611.7 C584.1 603.5 587.5 579.4 588.0 567.2 C588.5 554.9 589.3 545.0 588.8 538.0 C588.3 531.0 587.0 528.2 585.1 525.4 C583.2 522.5 580.2 520.9 577.5 521.0 C574.7 521.1 571.2 523.3 568.6 525.9 C565.9 528.4 563.1 529.5 561.6 536.4 C560.1 543.3 560.5 554.7 559.7 567.2 C558.8 579.6 558.7 603.1 556.4 610.9 C554.1 618.6 549.5 614.0 545.9 613.5 C542.3 612.9 536.1 615.3 534.6 607.6 C533.1 599.9 536.2 582.0 537.0 567.2 C537.8 552.3 538.6 530.3 539.1 518.6 C539.6 506.8 538.6 501.0 540.2 496.7Z" fill="#33cc33"/><path d="M945.0 560.0 C950.4 558.5 949.9 567.1 952.1 571.2 C954.3 575.4 956.5 579.9 958.3 584.9 C960.1 589.9 961.9 595.6 962.7 601.0 C963.5 606.4 963.8 611.5 963.3 617.1 C962.8 622.7 961.5 628.8 959.6 634.4 C957.7 640.0 955.4 645.1 952.1 650.5 C948.8 655.9 944.8 661.9 939.8 666.6 C934.8 671.4 928.4 675.6 922.4 679.0 C916.4 682.4 910.0 685.2 903.8 687.0 C897.6 688.8 891.5 689.5 885.3 689.5 C879.1 689.5 872.7 688.6 866.7 687.0 C860.7 685.4 853.8 683.3 849.3 679.6 C844.8 675.9 834.9 674.9 840.0 665.0 C845.1 655.1 866.7 634.2 880.0 620.0 C893.3 605.8 909.2 590.0 920.0 580.0 C930.8 570.0 939.6 561.5 945.0 560.0Z" fill="#000"/><path d="M938.0 575.0 C942.1 574.1 943.0 581.2 944.7 584.9 C946.4 588.6 947.5 592.9 948.4 597.2 C949.3 601.5 950.2 606.1 950.3 610.9 C950.4 615.6 950.1 620.8 949.0 625.7 C947.9 630.7 946.1 635.9 943.5 640.6 C940.9 645.4 937.5 650.1 933.6 654.2 C929.7 658.3 924.9 662.3 919.9 665.4 C914.9 668.5 908.5 671.0 903.8 672.8 C899.1 674.5 895.5 675.7 891.5 675.9 C887.5 676.1 881.9 676.6 880.0 674.0 C878.1 671.4 876.7 667.3 880.0 660.0 C883.3 652.7 893.3 641.7 900.0 630.0 C906.7 618.3 913.7 599.2 920.0 590.0 C926.3 580.8 933.9 575.9 938.0 575.0Z" fill="#fff"/><path d="M786.0 590.0 C784.4 595.0 788.8 599.8 790.5 604.7 C792.2 609.6 793.7 614.4 796.1 619.5 C798.5 624.6 801.3 630.2 804.8 635.6 C808.3 641.0 812.5 646.3 817.2 651.7 C822.0 657.1 828.8 663.7 833.3 667.8 C837.8 671.9 839.9 674.0 844.4 676.5 C848.9 679.0 855.6 682.2 860.5 683.0 C865.4 683.8 870.3 682.1 874.0 681.0 C877.7 679.9 879.5 678.1 882.8 676.5 C886.1 674.9 890.0 674.2 893.9 671.5 C897.8 668.8 902.4 664.9 906.3 660.4 C910.2 655.9 914.2 650.1 917.5 644.3 C920.8 638.5 923.8 631.9 926.1 625.7 C928.4 619.5 929.9 612.7 931.1 607.2 C932.4 601.7 934.6 598.3 933.6 592.9 C932.6 587.5 947.3 578.0 925.0 575.0 C902.7 572.0 823.2 572.5 800.0 575.0 C776.8 577.5 787.6 585.0 786.0 590.0Z" fill="#000"/><path d="M806.0 598.0 C804.5 602.4 809.4 607.5 811.0 611.5 C812.6 615.5 813.9 618.2 815.9 622.0 C817.9 625.8 820.0 630.3 823.3 634.4 C826.6 638.5 831.4 643.3 835.7 646.8 C840.0 650.3 844.1 653.0 849.3 655.4 C854.5 657.8 861.7 660.5 866.7 661.0 C871.7 661.5 875.4 660.5 879.1 658.5 C882.8 656.5 885.9 652.9 889.0 649.3 C892.1 645.7 894.9 641.4 897.6 636.9 C900.3 632.4 903.0 627.0 905.1 622.0 C907.2 617.0 908.7 612.0 910.0 607.2 C911.3 602.5 913.9 598.0 913.1 593.5 C912.3 589.0 920.5 581.4 905.0 580.0 C889.5 578.6 836.5 582.0 820.0 585.0 C803.5 588.0 807.5 593.6 806.0 598.0Z" fill="#fff"/><path d="M722.0 372.0 C712.8 378.4 723.2 381.1 724.8 388.6 C726.4 396.1 728.1 407.6 731.4 417.1 C734.7 426.6 741.3 436.2 744.8 445.7 C748.3 455.2 749.7 464.8 752.4 474.3 C755.1 483.8 758.5 494.0 761.0 502.9 C763.5 511.8 761.1 521.4 767.6 527.6 C774.1 533.8 772.9 541.3 800.0 540.0 C827.1 538.7 907.1 528.4 930.0 520.0 C952.9 511.6 936.9 498.4 937.1 489.5 C937.3 480.6 934.2 475.6 931.4 466.7 C928.5 457.8 924.8 447.6 920.0 436.2 C915.2 424.8 908.9 409.2 902.9 398.1 C896.9 387.0 889.3 376.7 883.8 369.5 C878.3 362.3 887.3 358.2 870.0 355.0 C852.7 351.8 804.7 347.2 780.0 350.0 C755.3 352.8 731.2 365.6 722.0 372.0Z" fill="#000"/><path d="M750.5 387.6 Q805 384.5 856.2 376.2 Q872 397 881.9 417.1 Q894 441 902.9 466.7 L909.5 487.6 Q876 490.5 841.9 497.1 Q820 502 799 509.5 L794.3 493.3 Q790 480 784.8 466.7 Q777 448 767.6 430.5 Q758 412 753.3 398.1Z" fill="#ee4036"/><path d="M778.0 517.0 C782.8 514.8 788.4 512.8 799.0 509.5 C809.6 506.2 829.2 500.1 841.9 497.1 C854.6 494.1 863.7 493.1 875.0 491.5 C886.3 489.9 899.1 487.9 909.5 487.6 C919.9 487.3 930.6 487.9 937.1 489.5 C943.6 491.1 945.6 493.5 948.6 497.1 C951.6 500.7 953.5 504.2 955.2 511.0 C956.9 517.8 958.8 529.4 959.0 537.6 C959.2 545.9 957.5 554.8 956.2 560.5 C954.9 566.2 955.1 567.8 951.4 571.9 C947.7 576.0 940.4 581.5 934.0 585.0 C927.6 588.5 920.2 590.8 913.3 592.9 C906.4 595.0 902.2 595.4 892.4 597.6 C882.6 599.8 867.8 603.8 854.3 606.2 C840.8 608.6 822.0 612.2 811.4 611.9 C800.8 611.6 795.7 608.8 790.5 604.3 C785.3 599.8 783.3 593.1 780.0 585.2 C776.7 577.3 772.6 565.0 770.5 556.7 C768.4 548.5 767.7 541.3 767.6 535.7 C767.5 530.1 768.3 526.1 770.0 523.0 C771.7 519.9 773.2 519.2 778.0 517.0Z" fill="#000"/><path d="M791.4 544.3 Q802 537 816.2 531 Q834 525 854.3 520.5 Q873 517 892.4 514.8 Q908 513 921 512.9 Q929 512.5 930.5 514.8 Q933 520 933.3 528.1 Q934 542 932.8 554.8 Q923 561.5 911.4 566.2 Q893 572.5 873.3 576.7 Q854 580.5 835.2 582.4 Q820 584 805.7 584.3 Q800 576 797.1 566.2 Q793.5 555 791.4 544.3Z" fill="#fff"/><path d="M716.3 -330.9 A529.4 355.5 0 0 0 716.3 380.1 A526.4 355.5 0 0 0 716.3 -330.9Z" fill="#fff" stroke="#000" stroke-width="12"/><path d="M540.0 90.0 C501.0 94.7 540.1 111.0 540.2 118.0 C540.3 125.0 540.1 127.4 540.4 132.0 C540.7 136.6 540.4 140.6 541.9 145.5 C543.4 150.4 545.6 155.9 549.2 161.5 C552.9 167.1 557.7 173.4 563.8 179.0 C569.9 184.6 577.1 190.2 585.6 195.1 C594.1 200.0 605.1 204.9 614.8 208.2 C624.5 211.5 635.5 213.5 644.0 214.8 C652.5 216.1 657.3 216.3 665.8 215.9 C674.3 215.5 685.3 214.6 695.0 212.6 C704.7 210.6 714.5 207.9 724.2 203.8 C733.9 199.7 745.5 193.1 753.3 187.8 C761.1 182.5 766.5 176.9 770.8 171.8 C775.1 166.7 777.7 162.1 778.9 157.2 C780.1 152.3 778.7 146.8 778.1 142.6 C777.5 138.4 776.1 136.1 775.5 132.0 C774.9 127.9 774.8 125.0 774.5 118.0 C774.2 111.0 813.1 94.7 774.0 90.0 C734.9 85.3 579.0 85.3 540.0 90.0Z" fill="#cc58c0"/><circle cx="726.4" cy="473.3" r="60.2" fill="none" stroke="#2fbfbd" stroke-width="1.25"/><path d="M726.4 413 V533.5 M666.2 473.3 H786.6" stroke="#2fbfbd" stroke-width="1.25"/><path d="M760.4 342.2 C765.3 338.8 771.2 334.8 777.5 332.7 C783.8 330.6 790.6 329.3 797.9 329.8 C805.2 330.3 813.8 332.4 821.3 335.6 C828.8 338.8 836.5 344.2 843.1 348.8 C849.7 353.4 855.0 357.5 860.6 363.3 C866.2 369.1 872.2 377.7 876.7 383.8 C881.2 389.9 883.6 392.5 887.6 400.0 C891.6 407.5 896.7 419.1 901.0 428.6 C905.3 438.1 909.6 448.2 913.3 457.1 C916.9 466.0 920.2 473.6 922.9 481.9 C925.6 490.2 927.9 498.8 929.5 506.7 C931.1 514.6 932.0 523.8 932.4 529.5 C932.8 535.2 933.3 537.5 932.0 541.0 C930.7 544.5 928.9 547.3 924.8 550.5 C920.7 553.7 915.2 557.1 907.6 560.0 C900.0 562.9 886.9 566.0 879.0 567.6 C871.1 569.2 866.5 568.7 860.0 569.5 C853.5 570.3 847.5 571.8 840.0 572.3 C832.5 572.8 822.8 572.8 815.0 572.5 C807.2 572.2 798.5 572.5 793.3 570.3 C788.1 568.1 786.2 562.8 783.9 559.2 C781.6 555.6 780.5 552.2 779.7 548.7 C778.9 545.2 779.1 541.0 779.3 538.2 C779.5 535.4 780.3 534.7 780.7 531.9 C781.1 529.1 781.8 525.8 781.8 521.5 C781.8 517.2 781.2 510.6 780.7 506.4 C780.2 502.2 780.3 501.8 778.6 496.3 C776.9 490.8 773.4 481.7 770.3 473.3 C767.2 464.9 763.3 454.8 759.8 446.1 C756.3 437.4 752.4 428.6 749.3 420.9 C746.1 413.2 742.8 405.1 740.9 400.0 C739.0 394.9 738.8 393.2 738.2 390.0 C737.6 386.8 737.0 384.8 737.4 380.8 C737.8 376.9 738.5 370.9 740.3 366.3 C742.1 361.7 744.9 357.1 748.3 353.1 C751.6 349.1 755.5 345.6 760.4 342.2Z" fill="none" stroke="#2fbfbd" stroke-width="1.25"/><path d="M779.3 538.2 C780.7 534.4 782.9 530.8 787.0 527.7 C791.1 524.6 797.5 522.0 803.8 519.4 C810.1 516.8 818.7 513.9 824.7 512.0 C830.7 510.1 834.1 509.2 840.0 507.9 C845.9 506.6 850.3 505.6 860.0 504.4 C869.7 503.2 886.5 501.2 898.1 500.6 C909.7 500.0 922.5 500.0 929.5 501.0 C936.5 502.0 937.3 503.8 940.0 506.7 C942.7 509.6 944.4 513.7 945.7 518.1 C947.0 522.5 947.8 527.9 948.0 533.3 C948.2 538.7 947.4 545.7 946.7 550.5 C946.0 555.3 946.2 558.4 943.8 561.9 C941.4 565.4 938.4 567.9 932.4 571.4 C926.4 574.9 916.5 579.7 907.6 582.9 C898.7 586.1 886.9 588.8 879.0 590.5 C871.1 592.2 866.5 592.1 860.0 593.3 C853.5 594.5 847.6 597.1 840.0 597.9 C832.4 598.7 821.5 598.7 814.2 597.9 C806.9 597.1 800.9 595.7 796.4 593.1 C791.9 590.5 789.6 586.8 787.0 582.2 C784.4 577.6 782.1 570.6 780.7 565.4 C779.3 560.2 778.8 555.3 778.6 550.8 C778.4 546.3 777.9 542.1 779.3 538.2Z" fill="none" stroke="#2fbfbd" stroke-width="1.25"/><rect x="757.9" y="339.7" width="5" height="5" fill="none" stroke="#2fbfbd" stroke-width="1.1"/><rect x="778.2" y="503.9" width="5" height="5" fill="none" stroke="#2fbfbd" stroke-width="1.1"/><rect x="776.8" y="535.7" width="5" height="5" fill="none" stroke="#2fbfbd" stroke-width="1.1"/><rect x="790.8" y="567.8" width="5" height="5" fill="none" stroke="#2fbfbd" stroke-width="1.1"/><rect x="793.9" y="590.6" width="5" height="5" fill="none" stroke="#2fbfbd" stroke-width="1.1"/><rect x="927.0" y="498.5" width="5" height="5" fill="none" stroke="#2fbfbd" stroke-width="1.1"/><rect x="929.9" y="527.0" width="5" height="5" fill="none" stroke="#2fbfbd" stroke-width="1.1"/><path d="M701.4 379.4 L851.4 285.3" stroke="#4e5252" stroke-width="1.2"/><rect x="698.9" y="376.9" width="5" height="5" fill="none" stroke="#4e5252" stroke-width="1.1"/><rect x="848.9" y="282.8" width="5" height="5" fill="none" stroke="#3c4040" stroke-width="1.1"/><path d="M771.3 447.5 L780.7 506.4" stroke="#4e5252" stroke-width="1"/><path d="M793.3 507.4 L784.9 529.2" stroke="#4e5252" stroke-width="1"/><path d="M784.9 529.2 L779.3 538.2" stroke="#4e5252" stroke-width="1"/><path d="M774.5 550.2 L793.3 570.3" stroke="#4e5252" stroke-width="1"/><path d="M788.5 583.7 L796.4 593.1" stroke="#4e5252" stroke-width="1"/><path d="M796.4 593.1 L811.5 609" stroke="#4e5252" stroke-width="1"/><path d="M918.7 439.4 L932.4 529.5" stroke="#4e5252" stroke-width="1"/><path d="M918.1 498.1 L929.5 501" stroke="#4e5252" stroke-width="1"/><path d="M929.5 501 L941.3 504.4" stroke="#4e5252" stroke-width="1"/><path d="M951 521 L940 576.2" stroke="#4e5252" stroke-width="1"/><path d="M940 576.2 L932.4 529.5" stroke="#4e5252" stroke-width="1"/><rect x="768.8" y="445.0" width="5" height="5" fill="none" stroke="#4e5252" stroke-width="1.1"/><rect x="790.8" y="504.9" width="5" height="5" fill="none" stroke="#4e5252" stroke-width="1.1"/><rect x="782.4" y="526.7" width="5" height="5" fill="none" stroke="#4e5252" stroke-width="1.1"/><rect x="773.6" y="542.4" width="5" height="5" fill="none" stroke="#4e5252" stroke-width="1.1"/><rect x="772.0" y="547.7" width="5" height="5" fill="none" stroke="#4e5252" stroke-width="1.1"/><rect x="795.6" y="572.8" width="5" height="5" fill="none" stroke="#4e5252" stroke-width="1.1"/><rect x="786.0" y="581.2" width="5" height="5" fill="none" stroke="#4e5252" stroke-width="1.1"/><rect x="809.0" y="606.5" width="5" height="5" fill="none" stroke="#4e5252" stroke-width="1.1"/><rect x="916.2" y="436.9" width="5" height="5" fill="none" stroke="#4e5252" stroke-width="1.1"/><rect x="915.6" y="495.6" width="5" height="5" fill="none" stroke="#4e5252" stroke-width="1.1"/><rect x="938.8" y="501.9" width="5" height="5" fill="none" stroke="#4e5252" stroke-width="1.1"/><rect x="937.5" y="573.7" width="5" height="5" fill="none" stroke="#4e5252" stroke-width="1.1"/><path d="M848.7 506.2 L789.8 403.5 L794.8 391.1 L807.1 396.8 Z M789.8 403.5 L807.1 396.8 M794.8 391.1 L848.7 506.2" fill="none" stroke="#7d8cb8" stroke-width="1.3" stroke-linejoin="round"/><path d="M866 626.3 L840.5 515.6 L848.7 506.2 L858.6 513.7 Z M840.5 515.6 L858.6 513.7 M848.7 506.2 L866 626.3 M791 482.7 L848.7 506.2 L867.3 563.2" fill="none" stroke="#ff1414" stroke-width="1.3" stroke-linejoin="round"/><rect x="948" y="518" width="6" height="6" fill="#ff0000"/><rect x="942" y="553.8" width="6" height="6" fill="#ff0000"/><rect x="938" y="577.6" width="6" height="6" fill="#ff0000"/><path d="M1070.3 494.7 V504.2" stroke="#000" stroke-width="3.4" stroke-linecap="round"/><rect x="1326.5" y="504.5" width="1" height="1" fill="#bbb"/></svg>
<span style="font-size:13px;line-height:17px;color:#000;top:87.0px;left:226.0px;">0.6667</span>
<span style="font-size:13px;line-height:17px;color:#e4e4e4;top:86.5px;left:372.7px;">+/-</span>
<span style="font-size:13px;line-height:17px;color:#000;top:212.5px;left:1631.0px;">8</span>
<span style="font-size:13px;line-height:17px;color:#808080;top:236.5px;left:1717.6px;">...</span>
<span style="font-size:13px;line-height:17px;color:#e4e4e4;top:270.5px;left:1609.0px;transform:scaleX(0.967);">Basic Colors.png</span>
<span style="font-size:13px;line-height:17px;color:#f0f0f0;top:578.0px;left:1645.0px;transform:scaleX(1.032);">images (1).jpg</span>
<span style="font-size:13px;line-height:17px;color:#f0f0f0;top:622.0px;left:1645.0px;transform:scaleX(0.895);">G01</span>
<span style="font-size:13px;line-height:17px;color:#f0f0f0;top:710.0px;left:1660.0px;transform:scaleX(0.951);">B04</span>
<span style="font-size:13px;line-height:17px;color:#f0f0f0;top:798.0px;left:1660.0px;transform:scaleX(0.951);">B03</span>
<span style="font-size:13px;line-height:17px;color:#f0f0f0;top:842.0px;left:1660.0px;transform:scaleX(0.951);">B02</span>
<span style="font-size:13px;line-height:17px;color:#f0f0f0;top:908.0px;left:1660.0px;transform:scaleX(0.951);">B02</span>
<span style="font-size:13px;line-height:17px;color:#f0f0f0;top:952.0px;left:1660.0px;transform:scaleX(0.951);">B01</span>
<span style="font-size:13px;line-height:17px;color:#858585;top:996.0px;left:1645.0px;">WALL.jpg</span>
<span style="font-size:13px;line-height:17px;color:#000;top:804.0px;left:829.0px;">0</span>
<span style="font-size:13px;line-height:17px;color:#f0f0f0;top:804.0px;left:915.0px;">/</span>
<span style="font-size:13px;line-height:17px;color:#000;top:804.0px;left:930.0px;">480</span>
<span style="font-size:13px;line-height:17px;color:#f0f0f0;top:832.5px;left:415.0px;">1</span>
<span style="font-size:12px;line-height:16px;color:#d8992b;top:853.0px;left:55.2px;">0</span>
<span style="font-size:12px;line-height:16px;color:#f0f0f0;top:853.0px;left:103.2px;">6</span>
<span style="font-size:12px;line-height:16px;color:#f0f0f0;top:853.0px;left:147.8px;">12</span>
<span style="font-size:12px;line-height:16px;color:#f0f0f0;top:853.0px;left:195.8px;">18</span>
<span style="font-size:12px;line-height:16px;color:#f0f0f0;top:853.0px;left:243.8px;">24</span>
<span style="font-size:12px;line-height:16px;color:#f0f0f0;top:853.0px;left:291.8px;">30</span>
<span style="font-size:12px;line-height:16px;color:#f0f0f0;top:853.0px;left:339.8px;">36</span>
<span style="font-size:12px;line-height:16px;color:#f0f0f0;top:853.0px;left:387.8px;">42</span>
<span style="font-size:12px;line-height:16px;color:#f0f0f0;top:853.0px;left:435.8px;">48</span>
<span style="font-size:12px;line-height:16px;color:#f0f0f0;top:853.0px;left:483.8px;">54</span>
<span style="font-size:12px;line-height:16px;color:#f0f0f0;top:853.0px;left:531.8px;">60</span>
<span style="font-size:12px;line-height:16px;color:#f0f0f0;top:853.0px;left:579.8px;">66</span>
<span style="font-size:12px;line-height:16px;color:#f0f0f0;top:853.0px;left:627.8px;">72</span>
<span style="font-size:12px;line-height:16px;color:#f0f0f0;top:853.0px;left:675.8px;">78</span>
<span style="font-size:12px;line-height:16px;color:#f0f0f0;top:853.0px;left:723.8px;">84</span>
<span style="font-size:12px;line-height:16px;color:#f0f0f0;top:853.0px;left:771.8px;">90</span>
<span style="font-size:12px;line-height:16px;color:#f0f0f0;top:853.0px;left:819.8px;">96</span>
<span style="font-size:12px;line-height:16px;color:#f0f0f0;top:853.0px;left:864.5px;">102</span>
<span style="font-size:12px;line-height:16px;color:#f0f0f0;top:853.0px;left:912.5px;">108</span>
<span style="font-size:12px;line-height:16px;color:#f0f0f0;top:853.0px;left:960.9px;">114</span>
<span style="font-size:12px;line-height:16px;color:#f0f0f0;top:853.0px;left:1008.5px;">120</span>
<span style="font-size:12px;line-height:16px;color:#f0f0f0;top:853.0px;left:1056.5px;">126</span>
<span style="font-size:12px;line-height:16px;color:#f0f0f0;top:853.0px;left:1104.5px;">132</span>
<span style="font-size:12px;line-height:16px;color:#f0f0f0;top:853.0px;left:1152.5px;">138</span>
<span style="font-size:12px;line-height:16px;color:#f0f0f0;top:853.0px;left:1200.5px;">144</span>
<span style="font-size:12px;line-height:16px;color:#f0f0f0;top:853.0px;left:1248.5px;">150</span>
<span style="font-size:12px;line-height:16px;color:#f0f0f0;top:853.0px;left:1296.5px;">156</span>
<span style="font-size:12px;line-height:16px;color:#f0f0f0;top:853.0px;left:1344.5px;">162</span>
<span style="font-size:12px;line-height:16px;color:#f0f0f0;top:853.0px;left:1392.5px;">168</span>
<span style="font-size:12px;line-height:16px;color:#f0f0f0;top:853.0px;left:1440.5px;">174</span>
<span style="font-size:12px;line-height:16px;color:#f0f0f0;top:853.0px;left:1488.5px;">180</span>
<span style="font-size:12px;line-height:16px;color:#8e8e8e;top:886.0px;left:55.2px;">0</span>
<span style="font-size:12px;line-height:16px;color:#8e8e8e;top:886.0px;left:247.2px;">1</span>
<span style="font-size:12px;line-height:16px;color:#8e8e8e;top:886.0px;left:439.2px;">2</span>
<span style="font-size:12px;line-height:16px;color:#8e8e8e;top:886.0px;left:631.2px;">3</span>
<span style="font-size:12px;line-height:16px;color:#8e8e8e;top:886.0px;left:823.2px;">4</span>
<span style="font-size:12px;line-height:16px;color:#8e8e8e;top:886.0px;left:1015.2px;">5</span>
<span style="font-size:12px;line-height:16px;color:#8e8e8e;top:886.0px;left:1207.2px;">6</span>
<span style="font-size:12px;line-height:16px;color:#8e8e8e;top:886.0px;left:1399.2px;">7</span>
<svg style="left:0;top:0;pointer-events:none;font-family:'Liberation Sans','Noto Sans CJK JP',sans-serif;" width="1920" height="1050" viewBox="0 0 1920 1050">
<text x="813" y="21.6" font-size="15" fill="#1c1c1c" textLength="293.9" lengthAdjust="spacingAndGlyphs">マイぴょん動作試験 0 6 XmasJ.moho - Moho</text>
<text x="16" y="46.4" font-size="12" fill="#f0f0f0" textLength="34" lengthAdjust="spacingAndGlyphs">ファイル</text>
<text x="66" y="46.4" font-size="12" fill="#f0f0f0" textLength="24" lengthAdjust="spacingAndGlyphs">編集</text>
<text x="106" y="46.4" font-size="12" fill="#f0f0f0" textLength="24" lengthAdjust="spacingAndGlyphs">描画</text>
<text x="145" y="46.4" font-size="12" fill="#f0f0f0" textLength="30" lengthAdjust="spacingAndGlyphs">ボーン</text>
<text x="191" y="46.4" font-size="12" fill="#f0f0f0" textLength="61" lengthAdjust="spacingAndGlyphs">アニメーション</text>
<text x="268" y="46.4" font-size="12" fill="#f0f0f0" textLength="41" lengthAdjust="spacingAndGlyphs">スクリプト</text>
<text x="325" y="46.4" font-size="12" fill="#f0f0f0" textLength="24" lengthAdjust="spacingAndGlyphs">表示</text>
<text x="364" y="46.4" font-size="12" fill="#f0f0f0" textLength="45" lengthAdjust="spacingAndGlyphs">ウインドウ</text>
<text x="424" y="46.4" font-size="12" fill="#f0f0f0" textLength="30" lengthAdjust="spacingAndGlyphs">ヘルプ</text>
<text x="32" y="73.8" font-size="13" fill="#e4e4e4" textLength="192" lengthAdjust="spacingAndGlyphs">マイぴょん動作試験 0 6 XmasJ.moho</text>
<text x="63" y="99.4" font-size="12" fill="#e4e4e4" textLength="72" lengthAdjust="spacingAndGlyphs">グループを選択</text>
<text x="182" y="99.4" font-size="12" fill="#e4e4e4" textLength="28" lengthAdjust="spacingAndGlyphs">曲率:</text>
<text x="424" y="99.4" font-size="12" fill="#e4e4e4" textLength="34" lengthAdjust="spacingAndGlyphs">リセット</text>
<text x="12" y="127.4" font-size="12" fill="#f0f0f0" textLength="674.2" lengthAdjust="spacingAndGlyphs">曲率を選択されたポイントからサイドからサイドへドラッグして調整（&lt;ctrl/cmd&gt; をホールドしてポイントを選択、&lt;alt&gt; でピークポイントを維持）</text>
<text x="1847" y="127.4" font-size="12" fill="#f0f0f0" textLength="61" lengthAdjust="spacingAndGlyphs">フレーム： 0</text>
<text x="44.7" y="145.4" font-size="12" fill="#f0f0f0" textLength="28.6" lengthAdjust="spacingAndGlyphs">ツール</text>
<text x="12" y="164.4" font-size="12" fill="#f0f0f0" textLength="23" lengthAdjust="spacingAndGlyphs">描画</text>
<text x="12" y="268.4" font-size="12" fill="#f0f0f0" textLength="47" lengthAdjust="spacingAndGlyphs">塗りつぶし</text>
<text x="12" y="351.4" font-size="12" fill="#f0f0f0" textLength="29" lengthAdjust="spacingAndGlyphs">ボーン</text>
<text x="12" y="392.4" font-size="12" fill="#f0f0f0" textLength="37" lengthAdjust="spacingAndGlyphs">レイヤー</text>
<text x="12" y="454.4" font-size="12" fill="#f0f0f0" textLength="25" lengthAdjust="spacingAndGlyphs">カメラ</text>
<text x="12" y="495.4" font-size="12" fill="#f0f0f0" textLength="66" lengthAdjust="spacingAndGlyphs">ワークスペース</text>
<text x="1709.1" y="145.4" font-size="12" fill="#f0f0f0" textLength="35.8" lengthAdjust="spacingAndGlyphs">スタイル</text>
<text x="1568" y="173.4" font-size="12" fill="#8c8c8c" textLength="48" lengthAdjust="spacingAndGlyphs">塗りつぶし</text>
<text x="1568" y="199.4" font-size="12" fill="#8c8c8c" textLength="45" lengthAdjust="spacingAndGlyphs">ストローク</text>
<text x="1716.5" y="205.4" font-size="12" fill="#000" textLength="27" lengthAdjust="spacingAndGlyphs">ブラシ</text>
<text x="1721" y="220.4" font-size="12" fill="#000" textLength="18" lengthAdjust="spacingAndGlyphs">なし</text>
<text x="1550" y="225.9" font-size="12" fill="#f0f0f0">幅</text>
<text x="1550" y="251.4" font-size="12" fill="#f0f0f0" textLength="40" lengthAdjust="spacingAndGlyphs">エフェクト</text>
<text x="1629" y="251.8" font-size="13" fill="#e4e4e4" textLength="46" lengthAdjust="spacingAndGlyphs">&lt;未設…</text>
<text x="1550" y="283.4" font-size="12" fill="#f0f0f0" textLength="36" lengthAdjust="spacingAndGlyphs">色見本</text>
<text x="1573" y="424.9" font-size="12" fill="#f0f0f0" textLength="28" lengthAdjust="spacingAndGlyphs">コピー</text>
<text x="1631" y="424.9" font-size="12" fill="#808080" textLength="37" lengthAdjust="spacingAndGlyphs">ペースト</text>
<text x="1697" y="424.9" font-size="12" fill="#f0f0f0" textLength="33" lengthAdjust="spacingAndGlyphs">リセット</text>
<text x="1568" y="450.4" font-size="12" fill="#f0f0f0" textLength="23" lengthAdjust="spacingAndGlyphs">高度</text>
<text x="1622" y="450.4" font-size="12" fill="#f0f0f0" textLength="66" lengthAdjust="spacingAndGlyphs">チェッカー選択</text>
<text x="1709.4" y="478.4" font-size="12" fill="#f0f0f0" textLength="35.2" lengthAdjust="spacingAndGlyphs">レイヤー</text>
<text x="1587" y="519.8" font-size="13" fill="#e4e4e4" textLength="35" lengthAdjust="spacingAndGlyphs">名前...</text>
<text x="1604" y="546.3" font-size="13" fill="#f0f0f0" textLength="24" lengthAdjust="spacingAndGlyphs">名前</text>
<text x="1645" y="569.3" font-size="13" fill="#858585" textLength="24" lengthAdjust="spacingAndGlyphs">帽子</text>
<text x="1645" y="613.3" font-size="13" fill="#858585" textLength="164.9" lengthAdjust="spacingAndGlyphs">istockphoto-165942699-61…</text>
<text x="1660" y="657.3" font-size="13" fill="#f0f0f0" textLength="75" lengthAdjust="spacingAndGlyphs">右耳・マイぴょん</text>
<text x="1660" y="679.3" font-size="13" fill="#f0f0f0" textLength="35" lengthAdjust="spacingAndGlyphs">帽子 2</text>
<text x="1660" y="701.3" font-size="13" fill="#f0f0f0" textLength="63" lengthAdjust="spacingAndGlyphs">顔・マイぴょん</text>
<text x="1675" y="745.3" font-size="13" fill="#000" textLength="71" lengthAdjust="spacingAndGlyphs">サンタ服　左腕</text>
<text x="1675" y="767.3" font-size="13" fill="#f0f0f0" textLength="75" lengthAdjust="spacingAndGlyphs">左腕・マイぴょん</text>
<text x="1660" y="789.3" font-size="13" fill="#f0f0f0" textLength="75" lengthAdjust="spacingAndGlyphs">胴体・マイぴょん</text>
<text x="1675" y="833.3" font-size="13" fill="#f0f0f0" textLength="72" lengthAdjust="spacingAndGlyphs">右腕・マイピョン</text>
<text x="1660" y="877.3" font-size="13" fill="#f0f0f0" textLength="72" lengthAdjust="spacingAndGlyphs">左耳・マイピョン</text>
<text x="1660" y="899.3" font-size="13" fill="#f0f0f0" textLength="78" lengthAdjust="spacingAndGlyphs">シッポ・マイぴょん</text>
<text x="1675" y="943.3" font-size="13" fill="#f0f0f0" textLength="75" lengthAdjust="spacingAndGlyphs">左足・マイぴょん</text>
<text x="1675" y="987.3" font-size="13" fill="#f0f0f0" textLength="75" lengthAdjust="spacingAndGlyphs">右足・マイぴょん</text>
<text x="783" y="816.9" font-size="12" fill="#f0f0f0" textLength="36" lengthAdjust="spacingAndGlyphs">フレーム</text>
<text x="1458" y="816.4" font-size="12" fill="#e4e4e4" textLength="48" lengthAdjust="spacingAndGlyphs">表示画質</text>
<text x="75" y="846.9" font-size="12" fill="#f0f0f0" textLength="46" lengthAdjust="spacingAndGlyphs">チャンネル</text>
<text x="135" y="846.9" font-size="12" fill="#f0f0f0" textLength="48" lengthAdjust="spacingAndGlyphs">シーケンサ</text>
<text x="197" y="846.9" font-size="12" fill="#f0f0f0" textLength="70" lengthAdjust="spacingAndGlyphs">モーショングラフ</text>
<text x="325" y="845.4" font-size="12" fill="#e4e4e4" textLength="39.6" lengthAdjust="spacingAndGlyphs">スムーズ</text>
<text x="487" y="846.4" font-size="12" fill="#7c7c7c" textLength="63" lengthAdjust="spacingAndGlyphs">オニオンスキン</text>
<text x="606" y="846.9" font-size="12" fill="#f0f0f0" textLength="80" lengthAdjust="spacingAndGlyphs">相対キーフレーム</text>
<text x="743" y="846.9" font-size="12" fill="#f0f0f0" textLength="86.5" lengthAdjust="spacingAndGlyphs">キーを自動フリーズ</text>
</svg>
</body></html>
